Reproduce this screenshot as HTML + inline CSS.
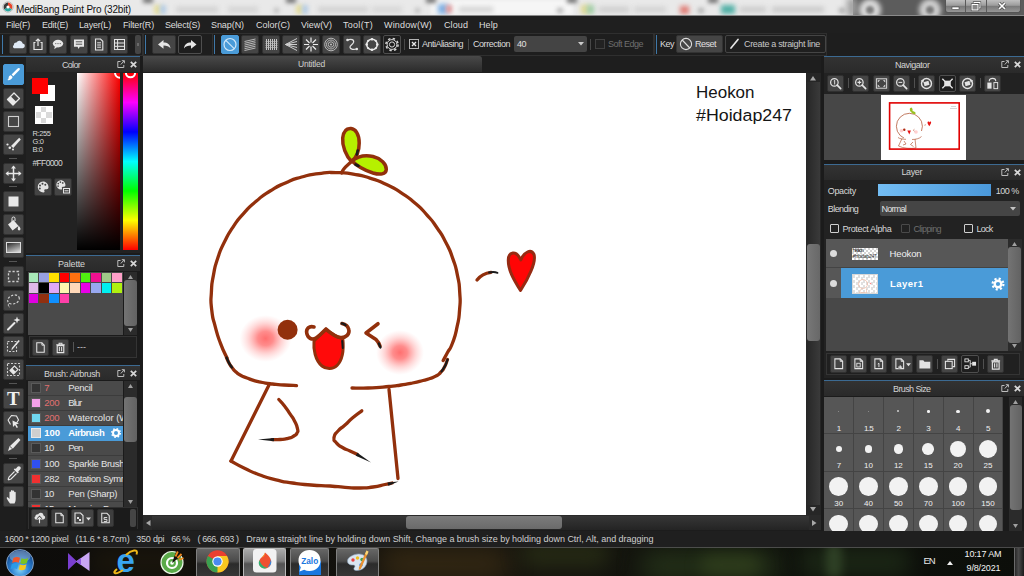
<!DOCTYPE html>
<html lang="en">
<head>
<meta charset="utf-8">
<title>MediBang Paint Pro (32bit)</title>
<style>
*{box-sizing:border-box;margin:0;padding:0}
html,body{width:1024px;height:576px;overflow:hidden;background:#1c1c1c}
body{position:relative;font-family:"Liberation Sans","DejaVu Sans",sans-serif;font-size:9px;color:#d8d8d8}
.a{position:absolute}
.t{position:absolute;white-space:nowrap;line-height:1}
svg{overflow:visible}
.tb{position:absolute;border-radius:2px;background:#454545;border:1px solid #303030}
.tb.dk{background:#1e1e1e;border:1px solid #4e4e4e}
.tb.bl{background:#4a9bd8;border-color:#4a9bd8}
.vb{position:absolute;width:1px;background:#3f78a8}
.ph{position:absolute;height:16px;background:linear-gradient(#343434,#2b2b2b);border-top:1px solid #3c6a92}
.pb{position:absolute;background:#464646}

</style>
</head>
<body>
<div class="a" style="left:0px;top:0px;width:1024px;height:16px;overflow:hidden"><div class="a" style="left:0px;top:0px;width:853px;height:15px;background:#e9e9e9"></div><div class="a" style="left:431px;top:0px;width:142px;height:15px;background:#f6f6f6;filter:blur(2px)"></div><div class="a" style="left:154px;top:5px;width:7px;height:9px;background:#e4dc9c;filter:blur(2px);"></div><div class="a" style="left:160px;top:5px;width:6px;height:9px;background:#b4cce4;filter:blur(2px);"></div><div class="a" style="left:176px;top:7px;width:42px;height:5px;background:#cfcfcf;filter:blur(2.5px);"></div><div class="a" style="left:228px;top:7px;width:30px;height:5px;background:#d2d2d2;filter:blur(2.5px);"></div><div class="a" style="left:274px;top:8px;width:5px;height:5px;background:#bdbdbd;filter:blur(2px);"></div><div class="a" style="left:296px;top:5px;width:7px;height:9px;background:#e4dc9c;filter:blur(2px);"></div><div class="a" style="left:302px;top:5px;width:6px;height:9px;background:#b4cce4;filter:blur(2px);"></div><div class="a" style="left:318px;top:7px;width:50px;height:5px;background:#cfcfcf;filter:blur(2.5px);"></div><div class="a" style="left:372px;top:7px;width:30px;height:5px;background:#d4d4d4;filter:blur(2.5px);"></div><div class="a" style="left:415px;top:8px;width:5px;height:5px;background:#bdbdbd;filter:blur(2px);"></div><div class="a" style="left:438px;top:4px;width:10px;height:10px;background:#7fb0e4;filter:blur(2.5px);"></div><div class="a" style="left:446px;top:5px;width:6px;height:8px;background:#e49a9a;filter:blur(2px);"></div><div class="a" style="left:459px;top:7px;width:34px;height:5px;background:#d0d0d0;filter:blur(2.5px);"></div><div class="a" style="left:557px;top:8px;width:6px;height:5px;background:#b4b4b4;filter:blur(2px);"></div><div class="a" style="left:581px;top:5px;width:8px;height:9px;background:#e0d890;filter:blur(2.5px);"></div><div class="a" style="left:587px;top:5px;width:7px;height:9px;background:#9ccca4;filter:blur(2.5px);"></div><div class="a" style="left:599px;top:7px;width:30px;height:5px;background:#cbcbcb;filter:blur(2.5px);"></div><div class="a" style="left:634px;top:7px;width:32px;height:5px;background:#d0d0d0;filter:blur(2.5px);"></div><div class="a" style="left:680px;top:6px;width:9px;height:8px;background:#e07a72;filter:blur(2.5px);"></div><div class="a" style="left:698px;top:8px;width:6px;height:5px;background:#b0b0b0;filter:blur(2px);"></div><div class="a" style="left:721px;top:5px;width:14px;height:9px;background:#52b0a6;filter:blur(2.5px);"></div><div class="a" style="left:740px;top:7px;width:26px;height:5px;background:#c8c8c8;filter:blur(2.5px);"></div><div class="a" style="left:772px;top:7px;width:52px;height:5px;background:#c6c6c6;filter:blur(2.5px);"></div><div class="a" style="left:839px;top:8px;width:6px;height:5px;background:#aaa;filter:blur(2px);"></div><div class="a" style="left:143px;top:-3px;width:10px;height:6px;background:#777;filter:blur(2px);"></div><div class="a" style="left:286px;top:-3px;width:10px;height:6px;background:#777;filter:blur(2px);"></div><div class="a" style="left:426px;top:-3px;width:10px;height:6px;background:#777;filter:blur(2px);"></div><div class="a" style="left:567px;top:-3px;width:10px;height:6px;background:#777;filter:blur(2px);"></div><div class="a" style="left:708px;top:-3px;width:10px;height:6px;background:#777;filter:blur(2px);"></div><div class="a" style="left:853px;top:0px;width:171px;height:15px;background:#5c5c5c"></div><div class="a" style="left:847px;top:-2px;width:10px;height:19px;background:#a0a0a0;filter:blur(3px);"></div><div class="a" style="left:858.5px;top:-1px;width:22px;height:22px;background:#dadada;filter:blur(2.5px);border-radius:11px;"></div><div class="a" style="left:865.5px;top:6px;width:8px;height:8px;background:#7c7c7c;filter:blur(1.8px);border-radius:4px;"></div><div class="a" style="left:918.5px;top:-1px;width:22px;height:22px;background:#d0d0d0;filter:blur(2.5px);border-radius:11px;"></div><div class="a" style="left:925.5px;top:6px;width:8px;height:8px;background:#787878;filter:blur(1.8px);border-radius:4px;"></div><div class="a" style="left:945px;top:0px;width:76px;height:13px;border-radius:0 0 3px 3px;background:linear-gradient(#c0c0c0,#9c9c9c 45%,#787878 50%,#969696);border:1px solid #555;border-top:0"></div><div class="a" style="left:965px;top:0px;width:1px;height:12px;background:#5a5a5a"></div><div class="a" style="left:986px;top:0px;width:1px;height:12px;background:#5a5a5a"></div><svg class="a" style="left:945px;top:0px;" width="76" height="14" viewBox="0 0 76 14"><rect x="7" y="7" width="7" height="2.5" fill="#fff" stroke="#444" stroke-width=".6"/><rect x="29" y="2.5" width="6" height="5.5" fill="none" stroke="#444" stroke-width="2.2"/><rect x="29" y="2.5" width="6" height="5.5" fill="none" stroke="#fff" stroke-width="1"/><rect x="27" y="4.5" width="6" height="5.5" fill="#888" stroke="#444" stroke-width="2.2"/><rect x="27" y="4.5" width="6" height="5.5" fill="#888" stroke="#fff" stroke-width="1"/><path d="M54 3l6 6M60 3l-6 6" stroke="#444" stroke-width="3"/><path d="M54 3l6 6M60 3l-6 6" stroke="#fff" stroke-width="1.7"/></svg><div class="a" style="left:0px;top:15px;width:1024px;height:1px;background:#8a8a8a"></div><svg class="a" style="left:2px;top:1px;" width="12" height="12" viewBox="0 0 12 12"><circle cx="6" cy="6" r="5.2" fill="#f4f4f4" stroke="#999" stroke-width=".6"/><path d="M6 6L6 1.6A4.4 4.4 0 0 1 9.8 8.2Z" fill="#e8452c"/><path d="M6 6L9.8 8.2A4.4 4.4 0 0 1 2.2 8.2Z" fill="#2aa8a0"/><path d="M6 6L2.2 8.2A4.4 4.4 0 0 1 6 1.6Z" fill="#3a3a3a"/><circle cx="6" cy="6" r="1.6" fill="#fff"/></svg><div class="t" style="left:16px;top:4.5px;font-size:10px;color:#111;letter-spacing:-0.20px;">MediBang Paint Pro (32bit)</div></div>
<div class="a" style="left:0px;top:16px;width:1024px;height:17px;background:#1f1f1f"><div class="t" style="left:6px;top:4.5px;font-size:9px;color:#dedede;letter-spacing:-0.29px;">File(F)</div><div class="t" style="left:42px;top:4.5px;font-size:9px;color:#dedede;letter-spacing:-0.22px;">Edit(E)</div><div class="t" style="left:79px;top:4.5px;font-size:9px;color:#dedede;letter-spacing:-0.19px;">Layer(L)</div><div class="t" style="left:123px;top:4.5px;font-size:9px;color:#dedede;letter-spacing:-0.17px;">Filter(R)</div><div class="t" style="left:165px;top:4.5px;font-size:9px;color:#dedede;letter-spacing:-0.22px;">Select(S)</div><div class="t" style="left:211px;top:4.5px;font-size:9px;color:#dedede;letter-spacing:-0.07px;">Snap(N)</div><div class="t" style="left:256px;top:4.5px;font-size:9px;color:#dedede;">Color(C)</div><div class="t" style="left:301px;top:4.5px;font-size:9px;color:#dedede;letter-spacing:-0.05px;">View(V)</div><div class="t" style="left:343px;top:4.5px;font-size:9px;color:#dedede;letter-spacing:0.28px;">Tool(T)</div><div class="t" style="left:384px;top:4.5px;font-size:9px;color:#dedede;letter-spacing:0.17px;">Window(W)</div><div class="t" style="left:444px;top:4.5px;font-size:9px;color:#dedede;letter-spacing:0.10px;">Cloud</div><div class="t" style="left:479px;top:4.5px;font-size:9px;color:#dedede;letter-spacing:0.12px;">Help</div></div>
<div class="a" style="left:0px;top:33px;width:1024px;height:23px;background:#1e1e1e"><div class="a" style="left:0px;top:0px;width:143px;height:23px;border:1px solid #2f2f2f;border-left:0"></div><div class="a" style="left:143px;top:0px;width:70px;height:23px;border:1px solid #2f2f2f"></div><div class="a" style="left:212px;top:0px;width:442px;height:23px;border:1px solid #2f2f2f"></div><div class="a" style="left:654px;top:0px;width:173px;height:23px;border:1px solid #2f2f2f"></div><div class="vb" style="left:2px;top:2px;height:19px"></div><div class="vb" style="left:145px;top:2px;height:19px"></div><div class="vb" style="left:214px;top:2px;height:19px"></div><div class="vb" style="left:656px;top:2px;height:19px"></div><div class="tb " style="left:9px;top:2px;width:18px;height:19px"><svg class="a" style="left:0px;top:0px;" width="16" height="17" viewBox="0 0 16 17"><path d="M4.2 12.2h8.2a2.3 2.3 0 0 0 .3-4.6 3.3 3.3 0 0 0-6.2-1 2.2 2.2 0 0 0-2.6 2.3 1.8 1.8 0 0 0 .3 3.3z" fill="#dfe9f5"/></svg></div><div class="tb " style="left:29px;top:2px;width:18px;height:19px"><svg class="a" style="left:0px;top:0px;" width="16" height="17" viewBox="0 0 16 17"><path d="M5.5 6.5H4v7h8v-7h-1.5" fill="none" stroke="#e6e6e6" stroke-width="1.2"/><path d="M8 10V3.2M5.8 5.2L8 3l2.2 2.2" fill="none" stroke="#e6e6e6" stroke-width="1.2"/></svg></div><div class="tb " style="left:49px;top:2px;width:18px;height:19px"><svg class="a" style="left:0px;top:0px;" width="16" height="17" viewBox="0 0 16 17"><ellipse cx="8" cy="7.6" rx="5.2" ry="3.8" fill="#e6e6e6"/><path d="M5 10l-.8 3.2 3.3-2.4z" fill="#e6e6e6"/><circle cx="5.8" cy="7.6" r=".6" fill="#555"/><circle cx="8" cy="7.6" r=".6" fill="#555"/><circle cx="10.2" cy="7.6" r=".6" fill="#555"/></svg></div><div class="tb " style="left:70px;top:2px;width:18px;height:19px"><svg class="a" style="left:0px;top:0px;" width="16" height="17" viewBox="0 0 16 17"><path d="M3 3.5h10v7.2H8.8L7.5 13 6.6 10.7H3z" fill="#e6e6e6"/><path d="M4.8 5.8h6.4M4.8 8.2h6.4" stroke="#555" stroke-width="1"/></svg></div><div class="tb " style="left:90px;top:2px;width:18px;height:19px"><svg class="a" style="left:0px;top:0px;" width="16" height="17" viewBox="0 0 16 17"><path d="M4.5 3h5l2.3 2.3V14H4.5z" fill="none" stroke="#e6e6e6" stroke-width="1.1"/><path d="M6.2 6.8h3.8M6.2 9h3.8M6.2 11.2h3.8" stroke="#e6e6e6" stroke-width="1"/></svg></div><div class="tb " style="left:110px;top:2px;width:18px;height:19px"><svg class="a" style="left:0px;top:0px;" width="16" height="17" viewBox="0 0 16 17"><rect x="3.5" y="3.5" width="10" height="10" fill="none" stroke="#e6e6e6" stroke-width="1"/><path d="M3.5 7h10M3.5 10.3h10M6.6 3.5v10" stroke="#e6e6e6" stroke-width="1"/><circle cx="5" cy="12" r="1.7" fill="#454545" stroke="#e6e6e6" stroke-width=".8"/></svg></div><div class="a" style="left:135px;top:2px;width:6px;height:19px;background:#454545;border-radius:2px"></div><div class="a" style="left:137px;top:10px;width:2px;height:3px;background:#6a6a6a"></div><div class="tb " style="left:152px;top:2px;width:24px;height:19px"><svg class="a" style="left:0px;top:0px;" width="22" height="17" viewBox="0 0 22 17"><path d="M5 8.5L10.5 4v2.6c4 0 6.6 1.9 7 6-1.6-2.3-3.7-3-7-3v3.2z" fill="#e6e6e6"/></svg></div><div class="tb dk" style="left:178px;top:2px;width:24px;height:19px"><svg class="a" style="left:0px;top:0px;" width="22" height="17" viewBox="0 0 22 17"><path d="M17.5 8.5L12 4v2.6c-4 0-6.6 1.9-7 6 1.6-2.3 3.7-3 7-3v3.2z" fill="#e6e6e6"/></svg></div><div class="tb bl" style="left:221px;top:2px;width:18px;height:19px"><svg class="a" style="left:0px;top:0px;" width="16" height="17" viewBox="0 0 16 17"><circle cx="8" cy="8.500" r="6" fill="none" stroke="#cfe6f8" stroke-width="1.200"/><path d="M3.800 4.300l8.400 8.400" stroke="#cfe6f8" stroke-width="1.200"/></svg></div><div class="tb " style="left:241px;top:2px;width:18px;height:19px"><svg class="a" style="left:0px;top:0px;" width="16" height="17" viewBox="0 0 16 17"><path d="M2.500 5.500l11-2.500M2.500 7.300l11-2.500M2.500 9.100l11-2.500M2.500 10.900l11-2.500M2.500 12.700l11-2.500M2.500 14.500l11-2.500" stroke="#c4c4c4" stroke-width=".9"/></svg></div><div class="tb " style="left:262px;top:2px;width:18px;height:19px"><svg class="a" style="left:0px;top:0px;" width="16" height="17" viewBox="0 0 16 17"><path d="M3.500 3v11M5.500 3v11M7.500 3v11M9.500 3v11M11.500 3v11M13.500 3v11" stroke="#d4d4d4" stroke-width=".9"/><path d="M2.500 5.500h12M2.500 7.500h12M2.500 9.500h12M2.500 11.500h12" stroke="#bbb" stroke-width=".7"/></svg></div><div class="tb " style="left:282px;top:2px;width:18px;height:19px"><svg class="a" style="left:0px;top:0px;" width="16" height="17" viewBox="0 0 16 17"><path d="M2.500 8.500L14 2.500M2.500 8.500L14 5.500M2.500 8.500H14M2.500 8.500L14 11.500M2.500 8.500L14 14.500" stroke="#cfcfcf" stroke-width="1"/></svg></div><div class="tb " style="left:302px;top:2px;width:18px;height:19px"><svg class="a" style="left:0px;top:0px;" width="16" height="17" viewBox="0 0 16 17"><path d="M8 1.500v5M8 10.500v5M1 8.500h5M10 8.500h5M3 3.500l3.500 3.500M9.500 10l3.500 3.500M13 3.500L9.500 7M6.500 10L3 13.500" stroke="#ececec" stroke-width="1.200"/></svg></div><div class="tb " style="left:322px;top:2px;width:18px;height:19px"><svg class="a" style="left:0px;top:0px;" width="16" height="17" viewBox="0 0 16 17"><circle cx="8" cy="8.500" r="6.300" fill="none" stroke="#c4c4c4" stroke-width=".9"/><circle cx="8" cy="8.500" r="4.500" fill="none" stroke="#c4c4c4" stroke-width=".9"/><circle cx="8" cy="8.500" r="2.700" fill="none" stroke="#c4c4c4" stroke-width=".9"/><circle cx="8" cy="8.500" r="1" fill="#c4c4c4"/></svg></div><div class="tb " style="left:343px;top:2px;width:18px;height:19px"><svg class="a" style="left:0px;top:0px;" width="16" height="17" viewBox="0 0 16 17"><path d="M3.500 4C7 2.500 10.500 3.500 9.500 6.500C8.500 9 5.500 9.500 6 11.500C6.500 13.500 10 13.800 12.500 13" fill="none" stroke="#e4e4e4" stroke-width="1.200"/><circle cx="3.500" cy="4" r="1.300" fill="#e4e4e4"/><circle cx="12.800" cy="13" r="1.300" fill="#e4e4e4"/></svg></div><div class="tb " style="left:363px;top:2px;width:18px;height:19px"><svg class="a" style="left:0px;top:0px;" width="16" height="17" viewBox="0 0 16 17"><circle cx="8" cy="8.500" r="5.300" fill="none" stroke="#ececec" stroke-width="1.400"/><g fill="#ececec"><circle cx="8" cy="3.200" r="1.300"/><circle cx="8" cy="13.800" r="1.300"/><circle cx="2.700" cy="8.500" r="1.300"/><circle cx="13.300" cy="8.500" r="1.300"/><circle cx="4.250" cy="4.750" r="1.100"/><circle cx="11.750" cy="4.750" r="1.100"/><circle cx="4.250" cy="12.250" r="1.100"/><circle cx="11.750" cy="12.250" r="1.100"/></g></svg></div><div class="tb dk" style="left:383px;top:2px;width:18px;height:19px"><svg class="a" style="left:0px;top:0px;" width="16" height="17" viewBox="0 0 16 17"><circle cx="8" cy="8.500" r="2.600" fill="none" stroke="#d8d8d8" stroke-width="1"/><circle cx="8" cy="8.500" r="4.900" fill="none" stroke="#d8d8d8" stroke-width="1" /><circle cx="8" cy="8.500" r="6.100" fill="none" stroke="#d8d8d8" stroke-width="1.500" stroke-dasharray="2.400 2.390"/></svg></div><div class="a" style="left:404px;top:6px;width:1px;height:11px;background:#484848"></div><div class="a" style="left:409px;top:6px;width:10px;height:10px;border:1px solid #b4b4b4;background:#1f1f1f"></div><svg class="a" style="left:409px;top:6px;" width="10" height="10" viewBox="0 0 10 10"><path d="M3 3l4 4M7 3l-4 4" stroke="#e8e8e8" stroke-width="1.300"/></svg><div class="t" style="left:422px;top:7px;font-size:9px;color:#dcdcdc;letter-spacing:-0.50px;">AntiAliasing</div><div class="a" style="left:468px;top:6px;width:1px;height:11px;background:#484848"></div><div class="t" style="left:473px;top:7px;font-size:9px;color:#dcdcdc;letter-spacing:-0.45px;">Correction</div><div class="a" style="left:514px;top:3px;width:73px;height:16px;background:#444;border-radius:2px"></div><div class="t" style="left:517px;top:7px;font-size:9px;color:#e0e0e0;letter-spacing:-0.51px;">40</div><svg class="a" style="left:578px;top:9px;" width="6" height="4" viewBox="0 0 6 4"><path d="M0 0h6L3 3.500z" fill="#ccc"/></svg><div class="a" style="left:590px;top:6px;width:1px;height:11px;background:#484848"></div><div class="a" style="left:595px;top:6px;width:10px;height:10px;border:1px solid #404040;background:#222"></div><div class="t" style="left:608px;top:7px;font-size:9px;color:#6e6e6e;letter-spacing:-0.50px;">Soft Edge</div><div class="t" style="left:660px;top:7px;font-size:9px;color:#dcdcdc;letter-spacing:-0.51px;">Key</div><div class="a" style="left:676px;top:2px;width:47px;height:18px;background:#454545;border-radius:2px;border:1px solid #333"></div><svg class="a" style="left:679px;top:4px;" width="14" height="14" viewBox="0 0 14 14"><circle cx="7" cy="7" r="5.600" fill="none" stroke="#ddd" stroke-width="1.100"/><path d="M3.200 3l7.600 8" stroke="#ddd" stroke-width="1.100"/></svg><div class="t" style="left:695px;top:7px;font-size:9px;color:#e0e0e0;letter-spacing:-0.50px;">Reset</div><div class="a" style="left:725px;top:2px;width:101px;height:18px;background:#1f1f1f;border-radius:2px;border:1px solid #454545"></div><svg class="a" style="left:730px;top:5px;" width="10" height="11" viewBox="0 0 10 11"><path d="M1 10L8 1.500" stroke="#e6e6e6" stroke-width="1.700" stroke-linecap="round"/></svg><div class="t" style="left:744px;top:7px;font-size:9px;color:#c8c8c8;letter-spacing:-0.32px;">Create a straight line</div></div>
<div class="a" style="left:0px;top:56px;width:26px;height:474px;background:#1e1e1e"><div class="a" style="left:0px;top:0px;width:26px;height:1px;background:#3c6a92"></div><div class="tb bl" style="left:3px;top:8px;width:21px;height:21px"><svg class="a" style="left:0px;top:0px;" width="19" height="19" viewBox="0 0 19 19"><path d="M15.500 3.200c.8.700.3 1.500-.5 2.300L9.300 11.200 7.600 9.500l5.700-5.800c.8-.8 1.500-1.100 2.200-.5z" fill="#fff"/><path d="M6.800 10.200l1.800 1.800c-.5 2.200-2.600 3.400-5.400 3.100 1.500-.8 1.300-1.800 1.500-2.900.2-1.100.9-1.800 2.100-2z" fill="#fff"/></svg></div><div class="tb " style="left:3px;top:32px;width:21px;height:21px"><svg class="a" style="left:0px;top:0px;" width="19" height="19" viewBox="0 0 19 19"><path d="M3.500 10.500L10 4l5.500 5.500L9 16z" fill="none" stroke="#e8e8e8" stroke-width="1.300" stroke-linejoin="round"/><path d="M3.500 10.500L6.700 7.300l5.500 5.500L9 16z" fill="#e8e8e8"/></svg></div><div class="tb " style="left:3px;top:55px;width:21px;height:21px"><svg class="a" style="left:0px;top:0px;" width="19" height="19" viewBox="0 0 19 19"><rect x="4.500" y="4.500" width="10" height="10" fill="none" stroke="#d0d0d0" stroke-width="1.100"/></svg></div><div class="tb " style="left:3px;top:78px;width:21px;height:21px"><svg class="a" style="left:0px;top:0px;" width="19" height="19" viewBox="0 0 19 19"><path d="M15.200 2.800L16.800 4.400 9.300 13 7 11z" fill="#e8e8e8"/><circle cx="3.500" cy="9.500" r="1.100" fill="#e8e8e8"/><circle cx="5.800" cy="12.800" r="1.300" fill="#e8e8e8"/><circle cx="9" cy="14.600" r="1" fill="#e8e8e8"/></svg></div><div class="a" style="left:9px;top:102px;width:8px;height:1px;background:#555"></div><div class="tb " style="left:3px;top:107px;width:21px;height:21px"><svg class="a" style="left:0px;top:0px;" width="19" height="19" viewBox="0 0 19 19"><path d="M9.500 2.500v14M2.500 9.500h14" stroke="#e8e8e8" stroke-width="1.500"/><path d="M9.500 1.500l2.500 3h-5zM9.500 17.500l2.500-3h-5zM1.500 9.500l3-2.500v5zM17.500 9.500l-3-2.500v5z" fill="#e8e8e8"/></svg></div><div class="a" style="left:9px;top:130px;width:8px;height:1px;background:#555"></div><div class="tb " style="left:3px;top:135px;width:21px;height:21px"><svg class="a" style="left:0px;top:0px;" width="19" height="19" viewBox="0 0 19 19"><rect x="4.500" y="4.500" width="10" height="10" fill="#e8e8e8"/></svg></div><div class="tb " style="left:3px;top:158px;width:21px;height:21px"><svg class="a" style="left:0px;top:0px;" width="19" height="19" viewBox="0 0 19 19"><path d="M4 9.500L9.500 5l5 6-6 4.500z" fill="#e8e8e8"/><path d="M8 7V3.500a1.500 1.500 0 0 1 3 0V6" fill="none" stroke="#e8e8e8" stroke-width="1"/><path d="M14.500 10.500c1 1.300 2 2.500 2 3.500a1.400 1.400 0 0 1-2.800 0c0-1 .8-2.200.8-3.500z" fill="#e8e8e8"/></svg></div><div class="tb" style="left:3px;top:181px;width:21px;height:21px"><div class="a" style="left:2px;top:4px;width:15px;height:11px;border:1px solid #dcdcdc;background:linear-gradient(160deg,#3c3c3c 10%,#d4d4d4 95%)"></div></div><div class="a" style="left:9px;top:205px;width:8px;height:1px;background:#555"></div><div class="tb " style="left:3px;top:210px;width:21px;height:21px"><svg class="a" style="left:0px;top:0px;" width="19" height="19" viewBox="0 0 19 19"><rect x="4.500" y="4.500" width="10" height="10" fill="none" stroke="#cfcfcf" stroke-width="1.300" stroke-dasharray="2.200 1.800"/></svg></div><div class="tb " style="left:3px;top:234px;width:21px;height:21px"><svg class="a" style="left:0px;top:0px;" width="19" height="19" viewBox="0 0 19 19"><ellipse cx="9.500" cy="8.500" rx="6" ry="4.300" fill="none" stroke="#cfcfcf" stroke-width="1.200" stroke-dasharray="2.200 1.600" transform="rotate(-20 9.500 8.500)"/><path d="M5 12.500c-1 1-1 2.500.5 3.500" fill="none" stroke="#cfcfcf" stroke-width="1"/></svg></div><div class="tb " style="left:3px;top:257px;width:21px;height:21px"><svg class="a" style="left:0px;top:0px;" width="19" height="19" viewBox="0 0 19 19"><path d="M4 15.500L10.500 9" stroke="#e8e8e8" stroke-width="2" stroke-linecap="round"/><path d="M13 2.500l.9 2.600 2.600.9-2.600.9-.9 2.600-.9-2.600-2.600-.9 2.600-.9z" fill="#e8e8e8"/></svg></div><div class="tb " style="left:3px;top:280px;width:21px;height:21px"><svg class="a" style="left:0px;top:0px;" width="19" height="19" viewBox="0 0 19 19"><rect x="3.500" y="4.500" width="9" height="10" fill="none" stroke="#cfcfcf" stroke-width="1.100" stroke-dasharray="2 1.500"/><path d="M15.800 4L9 11.800 7.500 13.500l.3-2.400L14.500 3z" fill="#e8e8e8"/></svg></div><div class="tb " style="left:3px;top:303px;width:21px;height:21px"><svg class="a" style="left:0px;top:0px;" width="19" height="19" viewBox="0 0 19 19"><rect x="3.500" y="3.500" width="12" height="12" fill="none" stroke="#cfcfcf" stroke-width="1.100" stroke-dasharray="2 1.500"/><path d="M6 10.500L10.500 6l3.500 3.500L9.500 14z" fill="none" stroke="#e8e8e8" stroke-width="1.100"/><path d="M6 10.500l2.200-2.200 3.500 3.500L9.500 14z" fill="#e8e8e8"/></svg></div><div class="a" style="left:9px;top:327px;width:8px;height:1px;background:#555"></div><div class="tb" style="left:3px;top:332px;width:21px;height:21px"><div class="t" style="left:3px;top:0px;font-size:19px;color:#f0f0f0;font-weight:700;font-family:'Liberation Serif',serif;">T</div></div><div class="tb " style="left:3px;top:355px;width:21px;height:21px"><svg class="a" style="left:0px;top:0px;" width="19" height="19" viewBox="0 0 19 19"><path d="M4 8l3.500-4.500 5 .5 2 4-2 3" fill="none" stroke="#e8e8e8" stroke-width="1.100"/><path d="M4 8l2.500 4.500" fill="none" stroke="#e8e8e8" stroke-width="1.100"/><path d="M8.500 8.500l6.500 3-2.800.8 1.800 3-1.300.7-1.700-3-2 2z" fill="#e8e8e8"/></svg></div><div class="tb " style="left:3px;top:378px;width:21px;height:21px"><svg class="a" style="left:0px;top:0px;" width="19" height="19" viewBox="0 0 19 19"><path d="M14.500 3l2 2-7.500 8.500-5 2.500 1.500-4.500z" fill="#e8e8e8"/><path d="M5.800 11.300l3 2.800" stroke="#444" stroke-width=".9"/></svg></div><div class="a" style="left:9px;top:402px;width:8px;height:1px;background:#555"></div><div class="tb " style="left:3px;top:407px;width:21px;height:21px"><svg class="a" style="left:0px;top:0px;" width="19" height="19" viewBox="0 0 19 19"><path d="M13.500 2.800a1.900 1.900 0 0 1 2.700 2.700l-2 2 .7.700-1.200 1.200-3.900-3.900 1.200-1.200.7.700z" fill="#e8e8e8"/><path d="M10.500 7.500L5 13l-.8 2.300.5.500L7 15l5.500-5.500" fill="none" stroke="#e8e8e8" stroke-width="1.100"/></svg></div><div class="tb " style="left:3px;top:430px;width:21px;height:21px"><svg class="a" style="left:0px;top:0px;" width="19" height="19" viewBox="0 0 19 19"><path d="M6 16.500c-1.500-2-2.600-3.600-3.200-5-.4-1 .8-1.600 1.500-.7L5.500 12V5.200c0-1.100 1.500-1.100 1.500 0V3.800c0-1.100 1.600-1.100 1.600 0v.6c0-1.100 1.600-1.100 1.600 0v1.200c0-1 1.500-1 1.500 0V12c0 1.800-.5 3.300-1.200 4.500z" fill="#e8e8e8"/></svg></div></div>
<div class="a" style="left:26px;top:56px;width:116px;height:474px;background:#1b1b1b"></div>
<div class="a" style="left:26px;top:56px;width:114px;height:16px;background:linear-gradient(#333,#2a2a2a)"><div class="a" style="left:0px;top:0px;width:114px;height:1px;background:#3c6a92"></div><div class="t" style="left:36px;top:4.5px;font-size:9px;color:#d4d4d4;letter-spacing:-0.70px;">Color</div><svg class="a" style="left:91px;top:4px;" width="8" height="8" viewBox="0 0 8 8"><path d="M3.500 1.500H.8v6h6V5" fill="none" stroke="#bdbdbd" stroke-width="1"/><path d="M3.800 4.500L7.200.800M4.800.700h2.600v2.600" fill="none" stroke="#bdbdbd" stroke-width="1"/></svg><svg class="a" style="left:103.5px;top:5px;" width="7" height="7" viewBox="0 0 7 7"><path d="M.8.800l5.400 5.400M6.200.800L.8 6.200" stroke="#d8d8d8" stroke-width="1.700"/></svg></div>
<div class="a" style="left:26px;top:72px;width:114px;height:181px;background:#222;overflow:hidden"><div class="a" style="left:13.5px;top:13px;width:15px;height:15.5px;background:#fff"></div><div class="a" style="left:6px;top:6px;width:16px;height:16px;background:#ff0000"></div><div class="a" style="left:8.5px;top:34px;width:18px;height:18px;background:#fff"></div><div class="a" style="left:9.5px;top:40.4px;width:5.4px;height:5.4px;background:#d9d9d9"></div><div class="a" style="left:14.9px;top:35.0px;width:5.4px;height:5.4px;background:#d9d9d9"></div><div class="a" style="left:14.9px;top:45.8px;width:5.4px;height:5.4px;background:#d9d9d9"></div><div class="a" style="left:20.3px;top:40.4px;width:5.4px;height:5.4px;background:#d9d9d9"></div><div class="t" style="left:6.5px;top:58px;font-size:7.5px;color:#d8d8d8;letter-spacing:-0.40px;">R:255</div><div class="t" style="left:6.5px;top:66px;font-size:7.5px;color:#d8d8d8;letter-spacing:-0.36px;">G:0</div><div class="t" style="left:6.5px;top:74px;font-size:7.5px;color:#d8d8d8;letter-spacing:-0.42px;">B:0</div><div class="t" style="left:6.5px;top:87px;font-size:8.5px;color:#d8d8d8;letter-spacing:-0.65px;">#FF0000</div><div class="tb" style="left:7.5px;top:106px;width:18px;height:18px"><svg class="a" style="left:0px;top:0px;" width="16" height="16" viewBox="0 0 16 16"><path d="M8 2.500a5.500 5.500 0 1 0 .5 11c1 0 1.300-.8.900-1.500-.5-.9 0-1.800 1-1.800h1.400c1 0 1.700-.7 1.700-1.900C13.500 5 11 2.500 8 2.500z" fill="#e4e4e4"/><circle cx="5" cy="6.500" r="1" fill="#444"/><circle cx="7.500" cy="4.800" r="1" fill="#444"/><circle cx="10.300" cy="5.800" r="1" fill="#444"/><circle cx="4.800" cy="9.500" r="1" fill="#444"/></svg></div><div class="tb" style="left:28px;top:106px;width:18px;height:18px"><svg class="a" style="left:0px;top:0px;" width="16" height="16" viewBox="0 0 16 16"><g transform="translate(-1 -1) scale(.85)"><path d="M8 2.500a5.500 5.500 0 1 0 .5 11c1 0 1.300-.8.900-1.500-.5-.9 0-1.800 1-1.800h1.400c1 0 1.700-.7 1.700-1.900C13.500 5 11 2.500 8 2.500z" fill="#e4e4e4"/><circle cx="5" cy="6.500" r="1" fill="#444"/><circle cx="7.500" cy="4.800" r="1" fill="#444"/><circle cx="10.300" cy="5.800" r="1" fill="#444"/><circle cx="4.800" cy="9.500" r="1" fill="#444"/></g><rect x="8.500" y="9.500" width="6" height="4.500" fill="#444" stroke="#e4e4e4" stroke-width="1"/><path d="M9.500 11.800h4" stroke="#e4e4e4" stroke-width="1"/></svg></div><div class="a" style="left:51px;top:1px;width:43px;height:177px;background:linear-gradient(to top,#000,rgba(0,0,0,0)),linear-gradient(to right,#fff,#f00)"></div><div class="a" style="left:97px;top:1px;width:15px;height:177px;background:linear-gradient(to bottom,#f00 0%,#f0f 16.600%,#00f 33.300%,#0ff 50%,#0f0 66.600%,#ff0 83.300%,#f00 100%)"></div><svg class="a" style="left:51px;top:1px;overflow:hidden" width="43" height="10" viewBox="0 0 43 10"><circle cx="43" cy="-.3" r="5" fill="none" stroke="#fff" stroke-width="2"/></svg><svg class="a" style="left:97px;top:1px;overflow:hidden" width="15" height="10" viewBox="0 0 15 10"><circle cx="7.500" cy="-.3" r="4.600" fill="none" stroke="#fff" stroke-width="2.100"/></svg></div>
<div class="a" style="left:26px;top:255px;width:114px;height:16px;background:linear-gradient(#333,#2a2a2a)"><div class="a" style="left:0px;top:0px;width:114px;height:1px;background:#3c6a92"></div><div class="t" style="left:32px;top:4.5px;font-size:9px;color:#d4d4d4;letter-spacing:-0.15px;">Palette</div><svg class="a" style="left:91px;top:4px;" width="8" height="8" viewBox="0 0 8 8"><path d="M3.500 1.500H.8v6h6V5" fill="none" stroke="#bdbdbd" stroke-width="1"/><path d="M3.800 4.500L7.200.800M4.800.700h2.600v2.600" fill="none" stroke="#bdbdbd" stroke-width="1"/></svg><svg class="a" style="left:103.5px;top:5px;" width="7" height="7" viewBox="0 0 7 7"><path d="M.8.800l5.400 5.400M6.200.800L.8 6.200" stroke="#d8d8d8" stroke-width="1.700"/></svg></div>
<div class="a" style="left:28px;top:272px;width:95px;height:63px;background:#4a4a4a"><div class="a" style="left:0.5px;top:0.8px;width:9.6px;height:9.4px;background:#a8e8b8"></div><div class="a" style="left:10.95px;top:0.8px;width:9.6px;height:9.4px;background:#98a0e0"></div><div class="a" style="left:21.4px;top:0.8px;width:9.6px;height:9.4px;background:#ffe000"></div><div class="a" style="left:31.85px;top:0.8px;width:9.6px;height:9.4px;background:#ff0000"></div><div class="a" style="left:42.3px;top:0.8px;width:9.6px;height:9.4px;background:#ff7010"></div><div class="a" style="left:52.75px;top:0.8px;width:9.6px;height:9.4px;background:#50f010"></div><div class="a" style="left:63.2px;top:0.8px;width:9.6px;height:9.4px;background:#f01090"></div><div class="a" style="left:73.65px;top:0.8px;width:9.6px;height:9.4px;background:#a0c888"></div><div class="a" style="left:84.1px;top:0.8px;width:9.6px;height:9.4px;background:#ffa0c8"></div><div class="a" style="left:0.5px;top:11.3px;width:9.6px;height:9.4px;background:#e0b8e8"></div><div class="a" style="left:10.95px;top:11.3px;width:9.6px;height:9.4px;background:#000000"></div><div class="a" style="left:21.4px;top:11.3px;width:9.6px;height:9.4px;background:#e0a8f8"></div><div class="a" style="left:31.85px;top:11.3px;width:9.6px;height:9.4px;background:#fff8b0"></div><div class="a" style="left:42.3px;top:11.3px;width:9.6px;height:9.4px;background:#ffd8b8"></div><div class="a" style="left:52.75px;top:11.3px;width:9.6px;height:9.4px;background:#e800e8"></div><div class="a" style="left:63.2px;top:11.3px;width:9.6px;height:9.4px;background:#98a8f0"></div><div class="a" style="left:73.65px;top:11.3px;width:9.6px;height:9.4px;background:#00f0f0"></div><div class="a" style="left:84.1px;top:11.3px;width:9.6px;height:9.4px;background:#b0f010"></div><div class="a" style="left:0.5px;top:21.8px;width:9.6px;height:9.4px;background:#e000e0"></div><div class="a" style="left:10.95px;top:21.8px;width:9.6px;height:9.4px;background:#903010"></div><div class="a" style="left:21.4px;top:21.8px;width:9.6px;height:9.4px;background:#1090ff"></div><div class="a" style="left:31.85px;top:21.8px;width:9.6px;height:9.4px;background:#ff40a8"></div></div>
<div class="a" style="left:124px;top:272px;width:13px;height:63px;background:#2b2b2b"></div><svg class="a" style="left:128.0px;top:275px;" width="5" height="4" viewBox="0 0 5 4"><path d="M0 4L2.500 0 5 4z" fill="#a0a0a0"/></svg><svg class="a" style="left:128.0px;top:328px;" width="5" height="4" viewBox="0 0 5 4"><path d="M0 0L2.500 4 5 0z" fill="#a0a0a0"/></svg><div class="a" style="left:124.3px;top:280px;width:12.4px;height:46px;background:linear-gradient(90deg,#747474,#626262);border-radius:3px"></div>
<div class="a" style="left:29px;top:336px;width:108px;height:22px;background:#202020;border:1px solid #343434"><div class="tb" style="left:2px;top:2px;width:17px;height:17px"><svg class="a" style="left:0px;top:0px;" width="15" height="15" viewBox="0 0 16 16"><path d="M4 3h5.500L12 5.500V13H4z" fill="none" stroke="#e4e4e4" stroke-width="1.100"/><path d="M9.500 3v2.500H12" fill="none" stroke="#e4e4e4" stroke-width="1"/></svg></div><div class="tb" style="left:22px;top:2px;width:17px;height:17px"><svg class="a" style="left:0px;top:0px;" width="15" height="15" viewBox="0 0 16 16"><path d="M4.500 6h7v7.500h-7z" fill="none" stroke="#e4e4e4" stroke-width="1.200"/><path d="M3.500 5h9M6.500 5V3.500h3V5M6.800 7.500v4.500M9.200 7.500v4.500" stroke="#e4e4e4" stroke-width="1.100" fill="none"/></svg></div><div class="a" style="left:43px;top:5px;width:1px;height:10px;background:#555"></div><div class="t" style="left:47px;top:5.5px;font-size:9px;color:#c8c8c8;">---</div></div>
<div class="a" style="left:26px;top:365px;width:114px;height:15px;background:linear-gradient(#333,#2a2a2a)"><div class="a" style="left:0px;top:0px;width:114px;height:1px;background:#3c6a92"></div><div class="t" style="left:18px;top:4.5px;font-size:9px;color:#d4d4d4;letter-spacing:-0.37px;">Brush: Airbrush</div><svg class="a" style="left:91px;top:4px;" width="8" height="8" viewBox="0 0 8 8"><path d="M3.500 1.500H.8v6h6V5" fill="none" stroke="#bdbdbd" stroke-width="1"/><path d="M3.800 4.500L7.200.800M4.800.700h2.600v2.600" fill="none" stroke="#bdbdbd" stroke-width="1"/></svg><svg class="a" style="left:103.5px;top:5px;" width="7" height="7" viewBox="0 0 7 7"><path d="M.8.800l5.400 5.400M6.200.800L.8 6.200" stroke="#d8d8d8" stroke-width="1.700"/></svg></div>
<div class="a" style="left:28px;top:381px;width:94.5px;height:125.5px;background:#4a4a4a;overflow:hidden;"><div class="a" style="left:0px;top:0.0px;width:95px;height:15.1px;background:#4a4a4a;border-bottom:1px solid #3c3c3c;overflow:hidden"><div class="a" style="left:2.5px;top:2px;width:10px;height:10px;background:#333;border:1px solid #5a5a5a"></div><div class="t" style="left:16.2px;top:2px;font-size:9.5px;color:#e07070;letter-spacing:-0.80px;">7</div><div class="t" style="left:40.3px;top:2px;font-size:9.5px;color:#e4e4e4;letter-spacing:-0.31px;">Pencil</div></div><div class="a" style="left:0px;top:15.1px;width:95px;height:15.1px;background:#4a4a4a;border-bottom:1px solid #3c3c3c;overflow:hidden"><div class="a" style="left:2.5px;top:2px;width:10px;height:10px;background:#f5a0e8;border:1px solid #5a5a5a"></div><div class="t" style="left:16.2px;top:2px;font-size:9.5px;color:#e07070;letter-spacing:-0.29px;">200</div><div class="t" style="left:40.3px;top:2px;font-size:9.5px;color:#e4e4e4;letter-spacing:-0.98px;">Blur</div></div><div class="a" style="left:0px;top:30.2px;width:95px;height:15.1px;background:#4a4a4a;border-bottom:1px solid #3c3c3c;overflow:hidden"><div class="a" style="left:2.5px;top:2px;width:10px;height:10px;background:#70d8f0;border:1px solid #5a5a5a"></div><div class="t" style="left:16.2px;top:2px;font-size:9.5px;color:#e07070;letter-spacing:-0.29px;">200</div><div class="t" style="left:40.3px;top:2px;font-size:9.5px;color:#e4e4e4;letter-spacing:-0.03px;">Watercolor (W</div></div><div class="a" style="left:0px;top:45.3px;width:95px;height:15.1px;background:#4a9bd8;border-bottom:1px solid #4a9bd8;overflow:hidden"><div class="a" style="left:2.5px;top:2px;width:10px;height:10px;background:#cfcfcf;border:1px solid #e8e8e8"></div><div class="t" style="left:16.2px;top:2px;font-size:9.5px;color:#fff;font-weight:700;letter-spacing:0.05px;">100</div><div class="t" style="left:40.3px;top:2px;font-size:9.5px;color:#fff;font-weight:700;letter-spacing:-0.45px;">Airbrush</div><svg class="a" style="left:82.5px;top:2px;" width="10" height="10" viewBox="0 0 10 10"><circle cx="5" cy="5" r="3" fill="none" stroke="#fff" stroke-width="2"/><circle cx="5" cy="5" r="4.300" fill="none" stroke="#fff" stroke-width="1.600" stroke-dasharray="1.500 1.880"/></svg></div><div class="a" style="left:0px;top:60.4px;width:95px;height:15.1px;background:#4a4a4a;border-bottom:1px solid #3c3c3c;overflow:hidden"><div class="a" style="left:2.5px;top:2px;width:10px;height:10px;background:#333;border:1px solid #5a5a5a"></div><div class="t" style="left:16.2px;top:2px;font-size:9.5px;color:#e4e4e4;letter-spacing:-0.54px;">10</div><div class="t" style="left:40.3px;top:2px;font-size:9.5px;color:#e4e4e4;letter-spacing:-0.97px;">Pen</div></div><div class="a" style="left:0px;top:75.5px;width:95px;height:15.1px;background:#4a4a4a;border-bottom:1px solid #3c3c3c;overflow:hidden"><div class="a" style="left:2.5px;top:2px;width:10px;height:10px;background:#3050f0;border:1px solid #5a5a5a"></div><div class="t" style="left:16.2px;top:2px;font-size:9.5px;color:#e4e4e4;letter-spacing:-0.29px;">100</div><div class="t" style="left:40.3px;top:2px;font-size:9.5px;color:#e4e4e4;letter-spacing:-0.28px;">Sparkle Brush</div></div><div class="a" style="left:0px;top:90.6px;width:95px;height:15.1px;background:#4a4a4a;border-bottom:1px solid #3c3c3c;overflow:hidden"><div class="a" style="left:2.5px;top:2px;width:10px;height:10px;background:#f03030;border:1px solid #5a5a5a"></div><div class="t" style="left:16.2px;top:2px;font-size:9.5px;color:#e4e4e4;letter-spacing:-0.29px;">282</div><div class="t" style="left:40.3px;top:2px;font-size:9.5px;color:#e4e4e4;letter-spacing:-0.38px;">Rotation Symm</div></div><div class="a" style="left:0px;top:105.7px;width:95px;height:15.1px;background:#4a4a4a;border-bottom:1px solid #3c3c3c;overflow:hidden"><div class="a" style="left:2.5px;top:2px;width:10px;height:10px;background:#333;border:1px solid #5a5a5a"></div><div class="t" style="left:16.2px;top:2px;font-size:9.5px;color:#e4e4e4;letter-spacing:-0.54px;">10</div><div class="t" style="left:40.3px;top:2px;font-size:9.5px;color:#e4e4e4;letter-spacing:-0.20px;">Pen (Sharp)</div></div><div class="a" style="left:0px;top:120.8px;width:95px;height:15.1px;background:#4a4a4a;border-bottom:1px solid #3c3c3c;overflow:hidden"><div class="a" style="left:2.5px;top:2px;width:10px;height:10px;background:#f03030;border:1px solid #5a5a5a"></div><div class="t" style="left:16.2px;top:2px;font-size:9.5px;color:#e4e4e4;letter-spacing:-0.54px;">15</div><div class="t" style="left:40.3px;top:2px;font-size:9.5px;color:#e4e4e4;letter-spacing:-0.54px;">Mapping Pen</div></div></div>
<div class="a" style="left:124px;top:381px;width:13px;height:126px;background:#2b2b2b"></div><svg class="a" style="left:128.0px;top:384px;" width="5" height="4" viewBox="0 0 5 4"><path d="M0 4L2.500 0 5 4z" fill="#a0a0a0"/></svg><svg class="a" style="left:128.0px;top:500px;" width="5" height="4" viewBox="0 0 5 4"><path d="M0 0L2.500 4 5 0z" fill="#a0a0a0"/></svg><div class="a" style="left:124.3px;top:397px;width:12.4px;height:45px;background:linear-gradient(90deg,#747474,#626262);border-radius:3px"></div>
<div class="a" style="left:28px;top:507px;width:109.5px;height:22px;border:1px solid #303030;border-bottom:0"></div>
<div class="tb" style="left:30.700px;top:508.500px;width:17.500px;height:18px"><svg class="a" style="left:0px;top:0px;" width="15" height="16" viewBox="0 0 16 16"><path d="M3.800 9.500h8.400a2.200 2.200 0 0 0 .2-4.300 3.200 3.200 0 0 0-6-1 2.200 2.200 0 0 0-2.800 2.200 1.700 1.700 0 0 0 .2 3.100z" fill="#e4e4e4"/><path d="M8 7v6.500M5.800 9.200L8 7l2.200 2.200" stroke="#444" stroke-width="2.200" fill="none"/><path d="M8 7.500v6M6 9.500L8 7.500l2 2" stroke="#e4e4e4" stroke-width="1.200" fill="none"/></svg></div>
<div class="tb" style="left:51.200px;top:508.500px;width:17px;height:18px;background:#3e3e3e"><svg class="a" style="left:0px;top:0px;" width="15" height="16" viewBox="0 0 16 16"><path d="M4 3h5.500L12 5.500V13H4z" fill="none" stroke="#e4e4e4" stroke-width="1.100"/><path d="M9.500 3v2.500H12" fill="none" stroke="#e4e4e4" stroke-width="1"/></svg></div>
<div class="tb" style="left:71px;top:508.500px;width:23px;height:18px"><svg class="a" style="left:0px;top:0px;" width="21" height="16" viewBox="0 0 21 16"><path d="M3 3h5.500L11 5.500V13H3z" fill="none" stroke="#e4e4e4" stroke-width="1.100"/><rect x="5" y="7" width="2" height="2" fill="#e4e4e4"/><rect x="7" y="9" width="2" height="2" fill="#e4e4e4"/><path d="M14 7.500h5L16.500 10.500z" fill="#e4e4e4"/></svg></div>
<div class="tb" style="left:97px;top:508.500px;width:17px;height:18px;background:#3e3e3e"><svg class="a" style="left:0px;top:0px;" width="15" height="16" viewBox="0 0 16 16"><path d="M4 3h5.500L12 5.500V13H4z" fill="none" stroke="#e4e4e4" stroke-width="1.100"/><path d="M9.800 7.500H6.500v2h3v2.200H6.200" fill="none" stroke="#e4e4e4" stroke-width="1"/></svg></div>
<div class="a" style="left:129.7px;top:509px;width:6.3px;height:17.5px;background:#454545;border-radius:2px"></div>
<div class="a" style="left:143px;top:56px;width:681px;height:17px;background:#1e1e1e"></div>
<div class="a" style="left:143px;top:56px;width:339px;height:16px;background:linear-gradient(#494949,#2b2b2b);border-radius:0 3px 0 0"><div class="t" style="left:155px;top:3.7px;font-size:8.5px;color:#cfcfcf;letter-spacing:-0.23px;">Untitled</div></div>
<div class="a" style="left:143px;top:73px;width:662.5px;height:442px;background:#fff;overflow:hidden"><svg class="a" style="left:0;top:0" width="663" height="442" viewBox="143 73 663 442"><defs><radialGradient id="bl"><stop offset="0" stop-color="#ff6868" stop-opacity=".95"/><stop offset=".3" stop-color="#ff7070" stop-opacity=".8"/><stop offset=".65" stop-color="#ff8c8c" stop-opacity=".36"/><stop offset="1" stop-color="#ffb0b0" stop-opacity="0"/></radialGradient></defs><ellipse cx="265.500" cy="338.500" rx="26" ry="23.500" fill="url(#bl)"/><ellipse cx="400" cy="352.500" rx="24" ry="22.500" fill="url(#bl)"/><path d="M227.0 358.0C224.9 353.2 224.5 354.0 220.6 343.6C216.7 333.2 218.3 338.1 215.3 326.8C212.3 315.5 213.0 321.2 211.7 309.6C210.4 298.0 210.8 303.7 211.4 292.1C212.0 280.5 211.4 286.2 213.5 274.9C215.6 263.6 214.2 269.0 217.8 258.1C221.4 247.2 219.3 252.4 224.4 242.1C229.5 231.8 226.6 236.7 233.0 227.1C239.4 217.5 236.0 222.0 243.7 213.4C251.4 204.8 247.3 208.8 256.1 201.3C264.9 193.8 260.3 197.1 270.1 191.0C279.9 184.9 274.9 187.6 285.4 182.9C295.9 178.2 290.6 180.1 301.7 177.0C312.8 173.9 307.3 175.1 318.7 173.6C330.1 172.1 324.5 172.4 336.0 172.6C347.5 172.8 341.9 172.4 353.2 174.2C364.5 176.0 359.0 174.7 369.9 178.1C380.8 181.5 375.6 179.5 385.9 184.3C396.2 189.1 391.3 186.4 400.9 192.6C410.5 198.8 406.0 195.4 414.6 202.8C423.2 210.2 419.2 206.3 426.8 214.8C434.4 223.3 430.9 218.9 437.3 228.2C443.7 237.5 440.8 232.7 446.0 242.8C451.2 252.9 449.0 247.8 452.8 258.6C456.6 269.4 455.1 263.9 457.4 275.1C459.7 286.3 459.0 280.7 459.7 292.2C460.4 303.7 460.5 298.0 459.6 309.5C458.7 321.0 459.5 315.5 457.1 326.7C454.7 337.9 455.7 334.4 452.5 343.0C449.3 351.6 450.6 346.7 447.5 352.5C444.4 358.3 444.6 357.8 443.2 360.5" fill="none" stroke="#92300c" stroke-width="3.3" stroke-linecap="round" stroke-linejoin="round" /><path d="M226.5 357.5C227.3 359.3 227.2 359.7 229.0 363.0C230.8 366.3 229.7 364.5 232.0 367.5C234.3 370.5 233.0 369.3 236.0 372.0C239.0 374.7 237.3 373.5 241.0 375.5C244.7 377.5 242.3 376.2 247.0 378.0C251.7 379.8 249.8 379.3 255.0 380.8C260.2 382.3 256.7 381.4 262.5 382.5C268.3 383.6 265.3 383.2 272.5 384.0C279.7 384.8 276.0 384.5 284.0 385.0C292.0 385.5 292.3 385.4 296.5 385.6" fill="none" stroke="#92300c" stroke-width="3.3" stroke-linecap="round" stroke-linejoin="round" /><path d="M352.0 388.0C357.3 388.0 355.7 388.5 368.0 388.0C380.3 387.5 378.0 387.5 389.0 386.5C400.0 385.5 393.2 386.2 401.0 385.0C408.8 383.8 405.2 384.5 412.5 383.0C419.8 381.5 417.2 382.0 423.0 380.5C428.8 379.0 425.7 380.0 430.0 378.5C434.3 377.0 432.5 378.0 436.0 376.0C439.5 374.0 437.7 375.5 440.5 372.5C443.3 369.5 442.2 371.3 444.5 367.0C446.8 362.7 446.5 362.0 447.5 359.5" fill="none" stroke="#92300c" stroke-width="3.3" stroke-linecap="round" stroke-linejoin="round" /><path d="M226.500 357.500C227.800 361 229.500 364.500 232 367.500" fill="none" stroke="#1a1a1a" stroke-width="2.2" stroke-linecap="round" stroke-linejoin="round" /><path d="M447.600 359.500C446.500 364 444.500 368 441.500 371.500" fill="none" stroke="#1a1a1a" stroke-width="2.2" stroke-linecap="round" stroke-linejoin="round" /><path d="M268.750 385.500L231 461" fill="none" stroke="#92300c" stroke-width="3.3" stroke-linecap="round" stroke-linejoin="round" /><path d="M231.0 461.0C235.7 463.5 235.3 463.8 245.0 468.5C254.7 473.2 249.7 471.2 260.0 475.0C270.3 478.8 265.2 477.1 276.0 479.8C286.8 482.5 280.8 481.3 292.5 483.0C304.2 484.7 298.5 484.0 311.0 485.0C323.5 486.0 318.7 485.2 330.0 486.0C341.3 486.8 335.0 486.6 345.0 487.3C355.0 488.0 350.7 488.1 360.0 488.0C369.3 487.9 364.7 488.2 373.0 487.0C381.3 485.8 378.7 485.8 385.0 484.5C391.3 483.2 389.7 483.5 392.0 483.0" fill="none" stroke="#92300c" stroke-width="3.3" stroke-linecap="round" stroke-linejoin="round" /><path d="M389 389.500L398 478.500" fill="none" stroke="#92300c" stroke-width="3.3" stroke-linecap="round" stroke-linejoin="round" /><path d="M387.500 482.500L388.300 485.800L398.500 481.500Z" fill="#1a1a1a"/><path d="M278.8 399.5C280.7 401.7 280.8 401.2 284.5 406.0C288.2 410.8 286.7 408.8 290.0 413.8C293.3 418.8 292.0 416.0 294.5 421.0C297.0 426.0 296.7 424.8 297.5 428.8C298.3 432.8 298.2 430.6 297.0 433.0C295.8 435.4 296.8 434.2 293.8 436.0C290.8 437.8 292.6 437.1 288.0 438.3C283.4 439.5 285.3 439.1 280.0 439.5C274.7 439.9 274.7 439.6 272.0 439.6" fill="none" stroke="#92300c" stroke-width="3.3" stroke-linecap="round" stroke-linejoin="round" /><path d="M274 438L274 441.200L258 439.400Z" fill="#1a1a1a"/><path d="M361.8 410.8C358.8 413.0 358.6 412.8 353.0 417.5C347.4 422.2 350.0 420.5 345.0 425.0C340.0 429.5 341.7 426.8 338.0 431.0C334.3 435.2 334.5 433.5 334.0 437.5C333.5 441.5 333.7 439.7 336.5 443.0C339.3 446.3 338.0 444.8 342.5 447.5C347.0 450.2 345.0 448.7 350.0 451.0C355.0 453.3 355.0 453.3 357.5 454.5" fill="none" stroke="#92300c" stroke-width="3.3" stroke-linecap="round" stroke-linejoin="round" /><path d="M357.300 452.700L355.800 455.800L371 462.600Z" fill="#1a1a1a"/><circle cx="287.600" cy="329.700" r="10" fill="#92300c"/><path d="M326 329.500C321 334 317 337.500 314 341C313.300 349 315 360 322 366C326 369.300 333 369.500 337 365.500C342.500 360 344 350 342.800 338.500C337 337 331 333.500 326 329.500Z" fill="#ff0a0a" stroke="#92300c" stroke-width="3" stroke-linejoin="round"/><path d="M314 327C309 325.500 306 329 306.700 333C307.500 338 312 340.500 316 338C320 335.500 323 332 326 329C330 332.500 335 337 340.500 337.500C346 338 350 334 348.800 329.500C348 326 345.500 324.200 342 323.500" fill="none" stroke="#92300c" stroke-width="3.6" stroke-linecap="round" stroke-linejoin="round" /><path d="M345.500 325.200C344.500 324.200 343.200 323.700 341.800 323.400" fill="none" stroke="#1a1a1a" stroke-width="2.4" stroke-linecap="round" stroke-linejoin="round" /><path d="M342.200 341l.6 7" fill="none" stroke="#1a1a1a" stroke-width="2" stroke-linecap="round" stroke-linejoin="round" /><path d="M378 323.750L366 333L376 339.500C378 341.500 379.300 344 380 346" fill="none" stroke="#92300c" stroke-width="3.6" stroke-linecap="round" stroke-linejoin="round" /><path d="M378.800 343.500L380.500 347.500" fill="none" stroke="#1a1a1a" stroke-width="2.2" stroke-linecap="round" stroke-linejoin="round" /><path d="M351.500 161.500C346 156 342 146 342.700 138C343.500 131 347 128.300 351 128.600C355.500 129 359.200 134 359.200 143C359.200 151 356 158 351.500 161.500Z" fill="#b6f000" stroke="#92300c" stroke-width="3.500" stroke-linejoin="round"/><path d="M352 161C358 156 366 155 373 156.500C381 158.500 386.500 164 386.300 169.500C386 174.500 380 175 373 173C365 170.500 357 166 352 161Z" fill="#b6f000" stroke="#92300c" stroke-width="3.500" stroke-linejoin="round"/><path d="M352.500 160.500C348 165 343 168 341.500 173" fill="none" stroke="#92300c" stroke-width="3.3" stroke-linecap="round" stroke-linejoin="round" /><path d="M357.800 150.500l-1 4" fill="none" stroke="#1a1a1a" stroke-width="2.6" stroke-linecap="round" stroke-linejoin="round" /><path d="M355.500 164.500l3 1.500" fill="none" stroke="#1a1a1a" stroke-width="2.6" stroke-linecap="round" stroke-linejoin="round" /><path d="M477 280C480 276 485 273 491 272.300" fill="none" stroke="#92300c" stroke-width="3.3" stroke-linecap="round" stroke-linejoin="round" /><path d="M489 272.500C492 271.800 495 271.800 497.500 272.800" fill="none" stroke="#1a1a1a" stroke-width="1.8" stroke-linecap="round" stroke-linejoin="round" /><path d="M520.500 290.500C514 280 508 270 508.300 260C508.500 252 516 249.500 520.800 260C524 252 531 248.500 534 254.500C536.500 262 528 279 520.500 290.500Z" fill="#ff0505" stroke="#962a12" stroke-width="3" stroke-linejoin="round"/><text x="696" y="97.500" font-family="Liberation Sans, sans-serif" font-size="16.300" fill="#151515" textLength="58.500" lengthAdjust="spacingAndGlyphs">Heokon</text><text x="696" y="121.300" font-family="Liberation Sans, sans-serif" font-size="16.300" fill="#151515" textLength="96" lengthAdjust="spacingAndGlyphs">#Hoidap247</text></svg></div>
<div class="a" style="left:805.5px;top:73px;width:15px;height:442px;background:#262626"><svg class="a" style="left:4.5px;top:2.5px;" width="6" height="4.5" viewBox="0 0 6 4.5"><path d="M0 4.500L3 0 6 4.500z" fill="#a8a8a8"/></svg><svg class="a" style="left:4.5px;top:434px;" width="6" height="4.5" viewBox="0 0 6 4.5"><path d="M0 0L3 4.500 6 0z" fill="#a8a8a8"/></svg><div class="a" style="left:0.5px;top:9px;width:14px;height:423px;background:linear-gradient(90deg,#262626,#3a3a3a)"></div><div class="a" style="left:1px;top:171px;width:13px;height:97px;background:linear-gradient(90deg,#787878,#686868);border-radius:3px"></div></div>
<div class="a" style="left:143px;top:515px;width:678px;height:15px;background:#2a2a2a"><svg class="a" style="left:3px;top:4.5px;" width="4.5" height="6" viewBox="0 0 4.5 6"><path d="M4.500 0L0 3 4.500 6z" fill="#a8a8a8"/></svg><svg class="a" style="left:669px;top:4.5px;" width="4.5" height="6" viewBox="0 0 4.5 6"><path d="M0 0L4.500 3 0 6z" fill="#a8a8a8"/></svg><div class="a" style="left:9px;top:0.5px;width:657px;height:14px;background:linear-gradient(#363636,#242424)"></div><div class="a" style="left:262.7px;top:1.2px;width:156.3px;height:12.6px;background:linear-gradient(#7c7c7c,#6a6a6a);border-radius:3px"></div></div>
<div class="a" style="left:821px;top:56px;width:203px;height:475px;background:#1b1b1b"></div>
<div class="a" style="left:824px;top:56px;width:200px;height:17px;background:linear-gradient(#333,#2a2a2a)"><div class="a" style="left:0px;top:0px;width:200px;height:1px;background:#3c6a92"></div><div class="t" style="left:71px;top:4.5px;font-size:9px;color:#d4d4d4;letter-spacing:-0.45px;">Navigator</div><svg class="a" style="left:177px;top:4px;" width="8" height="8" viewBox="0 0 8 8"><path d="M3.500 1.500H.8v6h6V5" fill="none" stroke="#bdbdbd" stroke-width="1"/><path d="M3.800 4.500L7.200.800M4.800.700h2.600v2.600" fill="none" stroke="#bdbdbd" stroke-width="1"/></svg><svg class="a" style="left:189.5px;top:5px;" width="7" height="7" viewBox="0 0 7 7"><path d="M.8.800l5.400 5.400M6.200.800L.8 6.200" stroke="#d8d8d8" stroke-width="1.700"/></svg></div>
<div class="a" style="left:824px;top:73px;width:200px;height:21px;background:#222"><div class="tb " style="left:3px;top:2px;width:17px;height:17px"><svg class="a" style="left:0px;top:0px;" width="15" height="15" viewBox="0 0 16 16"><circle cx="6.800" cy="6.800" r="4" fill="none" stroke="#e4e4e4" stroke-width="1.300"/><path d="M9.800 9.800l3.700 3.700" stroke="#e4e4e4" stroke-width="1.800" stroke-linecap="round"/><path d="M6.200 5.200l.9-.6v4.400" stroke="#e4e4e4" stroke-width="1" fill="none"/></svg></div><div class="a" style="left:24px;top:5px;width:1px;height:10px;background:#505050"></div><div class="tb " style="left:28px;top:2px;width:17px;height:17px"><svg class="a" style="left:0px;top:0px;" width="15" height="15" viewBox="0 0 16 16"><circle cx="6.800" cy="6.800" r="4" fill="none" stroke="#e4e4e4" stroke-width="1.300"/><path d="M9.800 9.800l3.700 3.700" stroke="#e4e4e4" stroke-width="1.800" stroke-linecap="round"/><path d="M4.800 6.800h4M6.800 4.800v4" stroke="#e4e4e4" stroke-width="1.100"/></svg></div><div class="tb " style="left:49px;top:2px;width:17px;height:17px"><svg class="a" style="left:0px;top:0px;" width="15" height="15" viewBox="0 0 16 16"><rect x="2.500" y="3" width="11" height="10" fill="none" stroke="#e4e4e4" stroke-width="1"/><path d="M4 4.500h2.500L4 7zM12 4.500H9.500L12 7zM4 11.500h2.500L4 9zM12 11.500H9.500L12 9z" fill="#e4e4e4"/></svg></div><div class="tb " style="left:69px;top:2px;width:17px;height:17px"><svg class="a" style="left:0px;top:0px;" width="15" height="15" viewBox="0 0 16 16"><circle cx="6.800" cy="6.800" r="4" fill="none" stroke="#e4e4e4" stroke-width="1.300"/><path d="M9.800 9.800l3.700 3.700" stroke="#e4e4e4" stroke-width="1.800" stroke-linecap="round"/><path d="M4.800 6.800h4" stroke="#e4e4e4" stroke-width="1.100"/></svg></div><div class="a" style="left:90px;top:5px;width:1px;height:10px;background:#505050"></div><div class="tb " style="left:94px;top:2px;width:17px;height:17px"><svg class="a" style="left:0px;top:0px;" width="15" height="15" viewBox="0 0 16 16"><circle cx="8" cy="8" r="5.300" fill="none" stroke="#e4e4e4" stroke-width="1.500"/><rect x="5.300" y="5.800" width="5.400" height="4.400" fill="#e4e4e4" transform="rotate(-15 8 8)"/><path d="M2 4.500l3.500-.5-1 3.200z" fill="#e4e4e4"/></svg></div><div class="tb dk" style="left:115px;top:2px;width:17px;height:17px"><svg class="a" style="left:0px;top:0px;" width="15" height="15" viewBox="0 0 16 16"><rect x="4.500" y="5" width="7" height="6" fill="#e4e4e4"/><path d="M2.500 3l3 3M13.500 3l-3 3M2.500 13l3-3M13.500 13l-3-3" stroke="#e4e4e4" stroke-width="1.500"/></svg></div><div class="tb " style="left:135px;top:2px;width:17px;height:17px"><svg class="a" style="left:0px;top:0px;" width="15" height="15" viewBox="0 0 16 16"><circle cx="8" cy="8" r="5.300" fill="none" stroke="#e4e4e4" stroke-width="1.500"/><rect x="5.300" y="5.800" width="5.400" height="4.400" fill="#e4e4e4" transform="rotate(-15 8 8)"/><path d="M14 4.500l-3.500-.5 1 3.200z" fill="#e4e4e4"/></svg></div><div class="a" style="left:156px;top:5px;width:1px;height:10px;background:#505050"></div><div class="tb " style="left:160px;top:2px;width:17px;height:17px"><svg class="a" style="left:0px;top:0px;" width="15" height="15" viewBox="0 0 16 16"><rect x="2.500" y="7" width="4.500" height="6.500" fill="#e4e4e4"/><rect x="9.500" y="7" width="4" height="6.500" fill="none" stroke="#e4e4e4" stroke-width="1"/><path d="M4.500 5.500c0-4 7-4 7 0" fill="none" stroke="#e4e4e4" stroke-width="1.200"/></svg></div></div>
<div class="a" style="left:824px;top:94px;width:200px;height:66px;background:#474747;overflow:hidden"><div class="a" style="left:57px;top:1px;width:85px;height:65px;background:#fff"></div><svg class="a" style="left:0;top:0" width="200" height="66" viewBox="824 94 200 66"><circle cx="909.400" cy="126.300" r="13" fill="none" stroke="#a8431f" stroke-width=".7"/><rect x="904" y="131" width="20" height="9" fill="#fff"/><path d="M902 138.500l-3.500 7.500c5 2.500 12 2.800 17.500 2l-1-9M898 137.500c2 1.500 5 1.800 8 1.800M912 139.500c3.500 0 7.500-.8 9.500-3M904 141l2 3-3 1M913 142l-2.500 2.500 3 2" fill="none" stroke="#a8431f" stroke-width=".6"/><ellipse cx="911.200" cy="109.800" rx="1.400" ry="2.200" fill="#9ac020" transform="rotate(-10 911.200 109.800)"/><ellipse cx="913.500" cy="112.600" rx="2.300" ry="1.300" fill="#9ac020" transform="rotate(25 913.500 112.600)"/><circle cx="904.300" cy="129.800" r="1.200" fill="#b02a10"/><path d="M907.300 130.500h3.600l-1.600 4z" fill="#e81010"/><circle cx="901.500" cy="130.700" r="1.800" fill="#ffb0b0" opacity=".6"/><circle cx="916" cy="132" r="1.800" fill="#ffb0b0" opacity=".6"/><path d="M914.500 129.200l-1.200 1 1.200 1" fill="none" stroke="#a8431f" stroke-width=".5"/><path d="M929.300 126.200c-1.800-2.200-2.300-4-1.300-4.600.8-.4 1.300.6 1.300 1 .2-.6.900-1.400 1.600-.8.800 1-.3 2.500-1.600 4.400z" fill="#e81010"/><path d="M924.300 125.300l1.700-.6" stroke="#a8431f" stroke-width=".5"/><path d="M951 106.500h5M950 108.500h7" stroke="#bbb" stroke-width=".6"/><rect x="889.600" y="102.900" width="69.600" height="46.200" fill="none" stroke="#e00000" stroke-width="1.600"/></svg></div>
<div class="a" style="left:824px;top:163.5px;width:200px;height:16px;background:linear-gradient(#333,#2a2a2a)"><div class="a" style="left:0px;top:0px;width:200px;height:1px;background:#3c6a92"></div><div class="t" style="left:77.5px;top:4.5px;font-size:9px;color:#d4d4d4;letter-spacing:-0.40px;">Layer</div><svg class="a" style="left:177px;top:4px;" width="8" height="8" viewBox="0 0 8 8"><path d="M3.500 1.500H.8v6h6V5" fill="none" stroke="#bdbdbd" stroke-width="1"/><path d="M3.800 4.500L7.200.800M4.800.700h2.600v2.600" fill="none" stroke="#bdbdbd" stroke-width="1"/></svg><svg class="a" style="left:189.5px;top:5px;" width="7" height="7" viewBox="0 0 7 7"><path d="M.8.800l5.400 5.400M6.200.800L.8 6.200" stroke="#d8d8d8" stroke-width="1.700"/></svg></div>
<div class="a" style="left:824px;top:179.5px;width:200px;height:198px;background:#222"><div class="t" style="left:3.7999999999999545px;top:7.0px;font-size:9px;color:#d8d8d8;letter-spacing:-0.36px;">Opacity</div><div class="a" style="left:54px;top:4.5px;width:113px;height:11.6px;background:linear-gradient(90deg,#73bdf3,#4a98da)"></div><div class="t" style="left:171.79999999999995px;top:7.0px;font-size:9px;color:#d8d8d8;letter-spacing:-0.51px;">100 %</div><div class="t" style="left:3.7999999999999545px;top:25.5px;font-size:9px;color:#d8d8d8;letter-spacing:-0.57px;">Blending</div><div class="a" style="left:56px;top:21.19999999999999px;width:139.5px;height:15.3px;background:#454545;border-radius:2px"></div><div class="t" style="left:57.5px;top:25.5px;font-size:9px;color:#e0e0e0;letter-spacing:-0.75px;">Normal</div><svg class="a" style="left:186px;top:27.5px;" width="6" height="4" viewBox="0 0 6 4"><path d="M0 0h6L3 3.500z" fill="#c4c4c4"/></svg><div class="a" style="left:6.2000000000000455px;top:44.5px;width:8.6px;height:8.8px;border:1px solid #cfcfcf;border-radius:1px"></div><div class="t" style="left:18.399999999999977px;top:45.0px;font-size:9px;color:#d8d8d8;letter-spacing:-0.35px;">Protect Alpha</div><div class="a" style="left:77px;top:44.5px;width:8.6px;height:8.8px;border:1px solid #4a4a4a;border-radius:1px"></div><div class="t" style="left:89.5px;top:45.0px;font-size:9px;color:#6e6e6e;letter-spacing:-0.63px;">Clipping</div><div class="a" style="left:140px;top:44.5px;width:8.6px;height:8.8px;border:1px solid #cfcfcf;border-radius:1px"></div><div class="t" style="left:152.5px;top:45.0px;font-size:9px;color:#d8d8d8;letter-spacing:-0.75px;">Lock</div><div class="a" style="left:2px;top:59.80000000000001px;width:181.5px;height:112px;background:#484848;overflow:hidden"><div class="a" style="left:0px;top:0px;width:181.5px;height:29px;background:#575757;border-bottom:1px solid #444"></div><div class="a" style="left:3.5px;top:11px;width:7px;height:7px;background:#dcdcdc;border-radius:50%"></div><div class="a" style="left:25.5px;top:8.7px;width:26px;height:12px;overflow:hidden"><div class="a" style="left:0px;top:0px;width:26px;height:12px;background:repeating-conic-gradient(#fff 0 25%,#d4d4d4 0 50%) 0 0/4px 4px"></div><div class="t" style="left:1px;top:0.5px;font-size:5px;color:#333;letter-spacing:-1.21px;">Heokon</div><div class="t" style="left:1px;top:6px;font-size:5px;color:#333;letter-spacing:-0.30px;">#Hoidap247</div></div><div class="t" style="left:63.5px;top:9.5px;font-size:9.5px;color:#f0f0f0;letter-spacing:-0.12px;">Heokon</div><div class="a" style="left:0px;top:29px;width:14.5px;height:29.5px;background:#575757"></div><div class="a" style="left:14.5px;top:29px;width:167px;height:29.5px;background:#4a9bd8"></div><div class="a" style="left:3.5px;top:40.5px;width:7px;height:7px;background:#dcdcdc;border-radius:50%"></div><div class="a" style="left:25.5px;top:34.3px;width:26px;height:20px;border:1px solid #d8d8d8;overflow:hidden"><div class="a" style="left:0px;top:0px;width:26px;height:20px;background:repeating-conic-gradient(#fff 0 25%,#e0e0e0 0 50%) 0 0/5px 5px"></div><svg class="a" style="left:0px;top:0px;" width="26" height="20" viewBox="0 0 26 20"><circle cx="10" cy="9" r="4.500" fill="none" stroke="#f0b8a0" stroke-width=".7"/><path d="M8 14l-1.500 3.500h7V14" fill="none" stroke="#f0b8a0" stroke-width=".6"/><circle cx="17.500" cy="8.500" r=".8" fill="#f88"/></svg></div><div class="t" style="left:64px;top:39.5px;font-size:9.5px;color:#fff;font-weight:700;letter-spacing:0.48px;">Layer1</div><svg class="a" style="left:165px;top:37.5px;" width="14" height="14" viewBox="0 0 14 14"><circle cx="7" cy="7" r="3.300" fill="none" stroke="#fff" stroke-width="2.400"/><circle cx="7" cy="7" r="5.400" fill="none" stroke="#fff" stroke-width="2.200" stroke-dasharray="2.100 2.140"/></svg></div></div>
<div class="a" style="left:1008px;top:239.3px;width:13.7px;height:112px;background:#2b2b2b"></div><svg class="a" style="left:1012.35px;top:242.3px;" width="5" height="4" viewBox="0 0 5 4"><path d="M0 4L2.500 0 5 4z" fill="#a0a0a0"/></svg><svg class="a" style="left:1012.35px;top:344.3px;" width="5" height="4" viewBox="0 0 5 4"><path d="M0 0L2.500 4 5 0z" fill="#a0a0a0"/></svg><div class="a" style="left:1008.3px;top:247px;width:13.1px;height:95.5px;background:linear-gradient(90deg,#747474,#626262);border-radius:3px"></div>
<div class="a" style="left:826px;top:352.5px;width:194px;height:22.5px;background:#202020;border:1px solid #343434"><div class="tb " style="left:2.7000000000000455px;top:1.500px;width:17px;height:17.500px"><svg class="a" style="left:0px;top:0px;" width="15" height="15.5" viewBox="0 0 15.4839 16"><path d="M4 3h5.500L12 5.500V13H4z" fill="none" stroke="#e4e4e4" stroke-width="1.100"/><path d="M9.500 3v2.500H12" fill="none" stroke="#e4e4e4" stroke-width="1"/></svg></div><div class="tb " style="left:23.299999999999955px;top:1.500px;width:17px;height:17.500px"><svg class="a" style="left:0px;top:0px;" width="15" height="15.5" viewBox="0 0 15.4839 16"><path d="M4 3h5.500L12 5.500V13H4z" fill="none" stroke="#e4e4e4" stroke-width="1.100"/><path d="M9.500 3v2.500H12" fill="none" stroke="#e4e4e4" stroke-width="1"/><rect x="6" y="7.500" width="3.500" height="3.800" fill="none" stroke="#e4e4e4" stroke-width=".9"/></svg></div><div class="tb " style="left:43.39999999999998px;top:1.500px;width:17px;height:17.500px"><svg class="a" style="left:0px;top:0px;" width="15" height="15.5" viewBox="0 0 15.4839 16"><path d="M4 3h5.500L12 5.500V13H4z" fill="none" stroke="#e4e4e4" stroke-width="1.100"/><path d="M9.500 3v2.500H12" fill="none" stroke="#e4e4e4" stroke-width="1"/><path d="M7 8.300l1.200-.8v4" fill="none" stroke="#e4e4e4" stroke-width="1"/></svg></div><div class="tb " style="left:63.700000000000045px;top:1.500px;width:22px;height:17.500px"><svg class="a" style="left:0px;top:0px;" width="20" height="15.5" viewBox="0 0 20.6452 16"><path d="M4 3h5.500L12 5.500V13H4z" fill="none" stroke="#e4e4e4" stroke-width="1.100"/><path d="M9.500 3v2.500H12" fill="none" stroke="#e4e4e4" stroke-width="1"/><path d="M8 9v4M6 11h4" stroke="#454545" stroke-width="2.600"/><path d="M8.500 9.500v4M6.500 11.500h4" stroke="#e4e4e4" stroke-width="1.100"/><path d="M14.500 7.500h5L17 10.500z" fill="#e4e4e4"/></svg></div><div class="tb " style="left:88.70000000000005px;top:1.500px;width:17px;height:17.500px"><svg class="a" style="left:0px;top:0px;" width="15" height="15.5" viewBox="0 0 15.4839 16"><path d="M2.500 4.500h4l1.200 1.500h6V13h-11.200z" fill="#e4e4e4"/></svg></div><div class="a" style="left:110px;top:5px;width:1px;height:10px;background:#505050"></div><div class="tb " style="left:114px;top:1.500px;width:17px;height:17.500px"><svg class="a" style="left:0px;top:0px;" width="15" height="15.5" viewBox="0 0 15.4839 16"><rect x="3.500" y="5.500" width="7" height="7.500" fill="none" stroke="#e4e4e4" stroke-width="1.100"/><path d="M6 5V3.500h7V11h-2" fill="none" stroke="#e4e4e4" stroke-width="1.100"/></svg></div><div class="tb dk" style="left:134.29999999999995px;top:1.500px;width:17.5px;height:17.500px"><svg class="a" style="left:0px;top:0px;" width="15.5" height="15.5" viewBox="0 0 16 16"><rect x="3" y="3" width="3.500" height="3" fill="none" stroke="#e4e4e4" stroke-width=".9"/><rect x="3" y="10" width="3.500" height="3" fill="none" stroke="#e4e4e4" stroke-width=".9"/><path d="M6.500 4.500h2v7h-2M8.500 8h2" fill="none" stroke="#e4e4e4" stroke-width=".9"/><rect x="10.500" y="6" width="4" height="4" fill="#e4e4e4"/></svg></div><div class="a" style="left:156px;top:5px;width:1px;height:10px;background:#505050"></div><div class="tb " style="left:160px;top:1.500px;width:17px;height:17.500px"><svg class="a" style="left:0px;top:0px;" width="15" height="15.5" viewBox="0 0 15.4839 16"><path d="M4.500 6h7v7.500h-7z" fill="none" stroke="#e4e4e4" stroke-width="1.200"/><path d="M3.500 5h9M6.500 5V3.500h3V5M6.800 7.500v4.500M9.200 7.500v4.500" stroke="#e4e4e4" stroke-width="1.100" fill="none"/></svg></div></div>
<div class="a" style="left:824px;top:380px;width:200px;height:16px;background:linear-gradient(#333,#2a2a2a)"><div class="a" style="left:0px;top:0px;width:200px;height:1px;background:#3c6a92"></div><div class="t" style="left:69px;top:4.5px;font-size:9px;color:#d4d4d4;letter-spacing:-0.60px;">Brush Size</div><svg class="a" style="left:177px;top:4px;" width="8" height="8" viewBox="0 0 8 8"><path d="M3.500 1.500H.8v6h6V5" fill="none" stroke="#bdbdbd" stroke-width="1"/><path d="M3.800 4.500L7.200.800M4.800.700h2.600v2.600" fill="none" stroke="#bdbdbd" stroke-width="1"/></svg><svg class="a" style="left:189.5px;top:5px;" width="7" height="7" viewBox="0 0 7 7"><path d="M.8.800l5.400 5.400M6.200.800L.8 6.200" stroke="#d8d8d8" stroke-width="1.700"/></svg></div>
<div class="a" style="left:824.3px;top:396.5px;width:179.2px;height:134.5px;background:#444;overflow:hidden"><div class="a" style="left:0.0px;top:0.0px;width:29.85px;height:37.6px;background:#565656;border-right:1px solid #444;border-bottom:1px solid #444;overflow:hidden"><div class="a" style="left:13.85px;top:14.25px;width:1.10px;height:1.10px;border-radius:50%;background:#9a9a9a"></div><div class="t" style="left:12.4px;top:28.3px;font-size:8px;color:#f0f0f0;letter-spacing:-0.45px;">1</div></div><div class="a" style="left:29.85px;top:0.0px;width:29.85px;height:37.6px;background:#565656;border-right:1px solid #444;border-bottom:1px solid #444;overflow:hidden"><div class="a" style="left:13.65px;top:14.05px;width:1.50px;height:1.50px;border-radius:50%;background:#9a9a9a"></div><div class="t" style="left:9.9px;top:28.3px;font-size:8px;color:#f0f0f0;letter-spacing:-0.71px;">1.5</div></div><div class="a" style="left:59.7px;top:0.0px;width:29.85px;height:37.6px;background:#565656;border-right:1px solid #444;border-bottom:1px solid #444;overflow:hidden"><div class="a" style="left:13.40px;top:13.80px;width:2.00px;height:2.00px;border-radius:50%;background:#d0d0d0"></div><div class="t" style="left:12.4px;top:28.3px;font-size:8px;color:#f0f0f0;letter-spacing:-0.45px;">2</div></div><div class="a" style="left:89.55px;top:0.0px;width:29.85px;height:37.6px;background:#565656;border-right:1px solid #444;border-bottom:1px solid #444;overflow:hidden"><div class="a" style="left:13.10px;top:13.50px;width:2.60px;height:2.60px;border-radius:50%;background:#f2f2f2"></div><div class="t" style="left:12.4px;top:28.3px;font-size:8px;color:#f0f0f0;letter-spacing:-0.45px;">3</div></div><div class="a" style="left:119.4px;top:0.0px;width:29.85px;height:37.6px;background:#565656;border-right:1px solid #444;border-bottom:1px solid #444;overflow:hidden"><div class="a" style="left:12.70px;top:13.10px;width:3.40px;height:3.40px;border-radius:50%;background:#f2f2f2"></div><div class="t" style="left:12.4px;top:28.3px;font-size:8px;color:#f0f0f0;letter-spacing:-0.45px;">4</div></div><div class="a" style="left:149.25px;top:0.0px;width:29.85px;height:37.6px;background:#565656;border-right:1px solid #444;border-bottom:1px solid #444;overflow:hidden"><div class="a" style="left:12.30px;top:12.70px;width:4.20px;height:4.20px;border-radius:50%;background:#f2f2f2"></div><div class="t" style="left:12.4px;top:28.3px;font-size:8px;color:#f0f0f0;letter-spacing:-0.45px;">5</div></div><div class="a" style="left:0.0px;top:37.6px;width:29.85px;height:37.6px;background:#565656;border-right:1px solid #444;border-bottom:1px solid #444;overflow:hidden"><div class="a" style="left:11.40px;top:11.80px;width:6.00px;height:6.00px;border-radius:50%;background:#f2f2f2"></div><div class="t" style="left:12.4px;top:28.3px;font-size:8px;color:#f0f0f0;letter-spacing:-0.45px;">7</div></div><div class="a" style="left:29.85px;top:37.6px;width:29.85px;height:37.6px;background:#565656;border-right:1px solid #444;border-bottom:1px solid #444;overflow:hidden"><div class="a" style="left:10.50px;top:10.90px;width:7.80px;height:7.80px;border-radius:50%;background:#f2f2f2"></div><div class="t" style="left:9.9px;top:28.3px;font-size:8px;color:#f0f0f0;letter-spacing:0.05px;">10</div></div><div class="a" style="left:59.7px;top:37.6px;width:29.85px;height:37.6px;background:#565656;border-right:1px solid #444;border-bottom:1px solid #444;overflow:hidden"><div class="a" style="left:9.60px;top:10.00px;width:9.60px;height:9.60px;border-radius:50%;background:#f2f2f2"></div><div class="t" style="left:9.9px;top:28.3px;font-size:8px;color:#f0f0f0;letter-spacing:0.05px;">12</div></div><div class="a" style="left:89.55px;top:37.6px;width:29.85px;height:37.6px;background:#565656;border-right:1px solid #444;border-bottom:1px solid #444;overflow:hidden"><div class="a" style="left:8.60px;top:9.00px;width:11.60px;height:11.60px;border-radius:50%;background:#f2f2f2"></div><div class="t" style="left:9.9px;top:28.3px;font-size:8px;color:#f0f0f0;letter-spacing:0.05px;">15</div></div><div class="a" style="left:119.4px;top:37.6px;width:29.85px;height:37.6px;background:#565656;border-right:1px solid #444;border-bottom:1px solid #444;overflow:hidden"><div class="a" style="left:6.50px;top:6.90px;width:15.80px;height:15.80px;border-radius:50%;background:#f2f2f2"></div><div class="t" style="left:9.9px;top:28.3px;font-size:8px;color:#f0f0f0;letter-spacing:0.05px;">20</div></div><div class="a" style="left:149.25px;top:37.6px;width:29.85px;height:37.6px;background:#565656;border-right:1px solid #444;border-bottom:1px solid #444;overflow:hidden"><div class="a" style="left:5.10px;top:5.50px;width:18.60px;height:18.60px;border-radius:50%;background:#f2f2f2"></div><div class="t" style="left:9.9px;top:28.3px;font-size:8px;color:#f0f0f0;letter-spacing:0.05px;">25</div></div><div class="a" style="left:0.0px;top:75.2px;width:29.85px;height:37.6px;background:#565656;border-right:1px solid #444;border-bottom:1px solid #444;overflow:hidden"><div class="a" style="left:5.00px;top:5.40px;width:18.80px;height:18.80px;border-radius:50%;background:#f2f2f2"></div><div class="t" style="left:9.9px;top:28.3px;font-size:8px;color:#f0f0f0;letter-spacing:0.05px;">30</div></div><div class="a" style="left:29.85px;top:75.2px;width:29.85px;height:37.6px;background:#565656;border-right:1px solid #444;border-bottom:1px solid #444;overflow:hidden"><div class="a" style="left:5.00px;top:5.40px;width:18.80px;height:18.80px;border-radius:50%;background:#f2f2f2"></div><div class="t" style="left:9.9px;top:28.3px;font-size:8px;color:#f0f0f0;letter-spacing:0.05px;">40</div></div><div class="a" style="left:59.7px;top:75.2px;width:29.85px;height:37.6px;background:#565656;border-right:1px solid #444;border-bottom:1px solid #444;overflow:hidden"><div class="a" style="left:5.00px;top:5.40px;width:18.80px;height:18.80px;border-radius:50%;background:#f2f2f2"></div><div class="t" style="left:9.9px;top:28.3px;font-size:8px;color:#f0f0f0;letter-spacing:0.05px;">50</div></div><div class="a" style="left:89.55px;top:75.2px;width:29.85px;height:37.6px;background:#565656;border-right:1px solid #444;border-bottom:1px solid #444;overflow:hidden"><div class="a" style="left:5.00px;top:5.40px;width:18.80px;height:18.80px;border-radius:50%;background:#f2f2f2"></div><div class="t" style="left:9.9px;top:28.3px;font-size:8px;color:#f0f0f0;letter-spacing:0.05px;">70</div></div><div class="a" style="left:119.4px;top:75.2px;width:29.85px;height:37.6px;background:#565656;border-right:1px solid #444;border-bottom:1px solid #444;overflow:hidden"><div class="a" style="left:5.00px;top:5.40px;width:18.80px;height:18.80px;border-radius:50%;background:#f2f2f2"></div><div class="t" style="left:7.7px;top:28.3px;font-size:8px;color:#f0f0f0;letter-spacing:0.05px;">100</div></div><div class="a" style="left:149.25px;top:75.2px;width:29.85px;height:37.6px;background:#565656;border-right:1px solid #444;border-bottom:1px solid #444;overflow:hidden"><div class="a" style="left:5.00px;top:5.40px;width:18.80px;height:18.80px;border-radius:50%;background:#f2f2f2"></div><div class="t" style="left:7.7px;top:28.3px;font-size:8px;color:#f0f0f0;letter-spacing:0.05px;">150</div></div><div class="a" style="left:0.0px;top:112.8px;width:29.85px;height:37.6px;background:#565656;border-right:1px solid #444;border-bottom:1px solid #444;overflow:hidden"><div class="a" style="left:5.00px;top:5.40px;width:18.80px;height:18.80px;border-radius:50%;background:#f2f2f2"></div><div class="t" style="left:7.7px;top:28.3px;font-size:8px;color:#f0f0f0;letter-spacing:0.05px;">200</div></div><div class="a" style="left:29.85px;top:112.8px;width:29.85px;height:37.6px;background:#565656;border-right:1px solid #444;border-bottom:1px solid #444;overflow:hidden"><div class="a" style="left:5.00px;top:5.40px;width:18.80px;height:18.80px;border-radius:50%;background:#f2f2f2"></div><div class="t" style="left:7.7px;top:28.3px;font-size:8px;color:#f0f0f0;letter-spacing:0.05px;">300</div></div><div class="a" style="left:59.7px;top:112.8px;width:29.85px;height:37.6px;background:#565656;border-right:1px solid #444;border-bottom:1px solid #444;overflow:hidden"><div class="a" style="left:5.00px;top:5.40px;width:18.80px;height:18.80px;border-radius:50%;background:#f2f2f2"></div><div class="t" style="left:7.7px;top:28.3px;font-size:8px;color:#f0f0f0;letter-spacing:0.05px;">400</div></div><div class="a" style="left:89.55px;top:112.8px;width:29.85px;height:37.6px;background:#565656;border-right:1px solid #444;border-bottom:1px solid #444;overflow:hidden"><div class="a" style="left:5.00px;top:5.40px;width:18.80px;height:18.80px;border-radius:50%;background:#f2f2f2"></div><div class="t" style="left:7.7px;top:28.3px;font-size:8px;color:#f0f0f0;letter-spacing:0.05px;">500</div></div><div class="a" style="left:119.4px;top:112.8px;width:29.85px;height:37.6px;background:#565656;border-right:1px solid #444;border-bottom:1px solid #444;overflow:hidden"><div class="a" style="left:5.00px;top:5.40px;width:18.80px;height:18.80px;border-radius:50%;background:#f2f2f2"></div><div class="t" style="left:7.7px;top:28.3px;font-size:8px;color:#f0f0f0;letter-spacing:0.05px;">700</div></div><div class="a" style="left:149.25px;top:112.8px;width:29.85px;height:37.6px;background:#565656;border-right:1px solid #444;border-bottom:1px solid #444;overflow:hidden"><div class="a" style="left:5.00px;top:5.40px;width:18.80px;height:18.80px;border-radius:50%;background:#f2f2f2"></div><div class="t" style="left:5.4px;top:28.3px;font-size:8px;color:#f0f0f0;letter-spacing:0.05px;">1000</div></div></div>
<div class="a" style="left:1009.3px;top:396.5px;width:13.2px;height:134.5px;background:#2b2b2b"></div><svg class="a" style="left:1013.4px;top:399.5px;" width="5" height="4" viewBox="0 0 5 4"><path d="M0 4L2.500 0 5 4z" fill="#a0a0a0"/></svg><svg class="a" style="left:1013.4px;top:524.0px;" width="5" height="4" viewBox="0 0 5 4"><path d="M0 0L2.500 4 5 0z" fill="#a0a0a0"/></svg><div class="a" style="left:1009.5999999999999px;top:405px;width:12.6px;height:104.5px;background:linear-gradient(90deg,#747474,#626262);border-radius:3px"></div>
<div class="a" style="left:0px;top:531px;width:1024px;height:16px;background:#1f1f1f"><div class="t" style="left:4.5px;top:4px;font-size:9px;color:#cfcfcf;letter-spacing:-0.33px;">1600 * 1200 pixel</div><div class="t" style="left:75.5px;top:4px;font-size:9px;color:#cfcfcf;letter-spacing:-0.13px;">(11.6 * 8.7cm)</div><div class="t" style="left:136.3px;top:4px;font-size:9px;color:#cfcfcf;letter-spacing:-0.22px;">350 dpi</div><div class="t" style="left:171.3px;top:4px;font-size:9px;color:#cfcfcf;letter-spacing:-0.50px;">66 %</div><div class="t" style="left:197.5px;top:4px;font-size:9px;color:#cfcfcf;letter-spacing:-0.42px;">( 666, 693 )</div><div class="t" style="left:246.3px;top:4px;font-size:9px;color:#cfcfcf;letter-spacing:-0.02px;">Draw a straight line by holding down Shift, Change a brush size by holding down Ctrl, Alt, and dragging</div></div>
<div class="a" style="left:0px;top:547px;width:1024px;height:29px;overflow:hidden;background:#0c0c0a"><div class="a" style="left:0px;top:0px;width:1024px;height:29px;background:linear-gradient(90deg,#0d0c0a 0,#100f0c 30%,#1a160e 40%,#15140e 55%,#0f120c 70%,#0c0e0a 100%)"></div><div class="a" style="left:380px;top:2px;width:130px;height:30px;background:#3a2c14;filter:blur(12px);opacity:0.8;border-radius:15px;"></div><div class="a" style="left:520px;top:-5px;width:90px;height:25px;background:#2a3016;filter:blur(10px);opacity:0.8;border-radius:12px;"></div><div class="a" style="left:640px;top:4px;width:140px;height:30px;background:#26341a;filter:blur(12px);opacity:0.9;border-radius:15px;"></div><div class="a" style="left:700px;top:8px;width:60px;height:20px;background:#34441e;filter:blur(8px);opacity:0.7;border-radius:10px;"></div><div class="a" style="left:800px;top:0px;width:110px;height:30px;background:#1c2816;filter:blur(10px);opacity:0.9;border-radius:12px;"></div><div class="a" style="left:826px;top:-4px;width:16px;height:36px;background:#34482a;filter:blur(5px);opacity:0.8;border-radius:8px;"></div><div class="a" style="left:90px;top:0px;width:100px;height:30px;background:#1c170c;filter:blur(10px);opacity:0.8;border-radius:12px;"></div><div class="a" style="left:0px;top:0px;width:1024px;height:1px;background:#5a5a5a;opacity:.8"></div><div class="a" style="left:195.7px;top:1px;width:44.3px;height:28px;background:linear-gradient(#6e6e6e 0,#505050 45%,#2e2e2e 55%,#3a3a3a 100%);border:1px solid #8a8a8a;border-bottom:0;border-radius:2px 2px 0 0;opacity:.92"></div><div class="a" style="left:243.2px;top:1px;width:43.3px;height:28px;background:linear-gradient(#b8b8b8 0,#8a8a8a 45%,#5a5a5a 55%,#6e6e6e 100%);border:1px solid #c8c8c8;border-bottom:0;border-radius:2px 2px 0 0;opacity:.92"></div><div class="a" style="left:289.5px;top:1px;width:39.5px;height:28px;background:linear-gradient(#6e6e6e 0,#505050 45%,#2e2e2e 55%,#3a3a3a 100%);border:1px solid #8a8a8a;border-bottom:0;border-radius:2px 2px 0 0;opacity:.92"></div><div class="a" style="left:335.7px;top:1px;width:43.3px;height:28px;background:linear-gradient(#6e6e6e 0,#505050 45%,#2e2e2e 55%,#3a3a3a 100%);border:1px solid #8a8a8a;border-bottom:0;border-radius:2px 2px 0 0;opacity:.92"></div><svg class="a" style="left:6px;top:1.5px;" width="28" height="28" viewBox="0 0 28 28"><defs><radialGradient id="ob" cx=".5" cy=".75" r=".75"><stop offset="0" stop-color="#7fd0f8"/><stop offset=".45" stop-color="#2a7fd0"/><stop offset="1" stop-color="#103a78"/></radialGradient></defs><circle cx="14" cy="14" r="13.500" fill="url(#ob)" stroke="#9ab8d8" stroke-width=".8"/><ellipse cx="14" cy="7.500" rx="10.500" ry="6" fill="#fff" opacity=".28"/><g transform="translate(14 14.500) scale(1.250) translate(-13.300 -14)"><path d="M8 9.500c1.800-1 3.500-1 5.300-.2l-1 4c-1.800-.8-3.500-.8-5.300.2z" fill="#f0562c"/><path d="M14.500 9.800c1.800.8 3.500.8 5.300-.2l-1 4c-1.800 1-3.500 1-5.300.2z" fill="#7cc420"/><path d="M6.700 14.500c1.800-1 3.500-1 5.300-.2l-1 4c-1.800-.8-3.500-.8-5.300.2z" fill="#2a9be8"/><path d="M13.200 14.800c1.800.8 3.500.8 5.300-.2l-1 4c-1.800 1-3.500 1-5.300.2z" fill="#f8c81c"/></g></svg><svg class="a" style="left:68px;top:5px;" width="22" height="19" viewBox="0 0 22 19"><path d="M0 1l9 8.500L0 18z" fill="#7a3fd0"/><path d="M21.500 0v19L8 9.500z" fill="#c8a6f4"/><path d="M8 9.500l5-3.800v7.600z" fill="#8f5ae0"/></svg><svg class="a" style="left:114px;top:3px;" width="24" height="22" viewBox="0 0 24 22"><text x="2.500" y="21.500" font-family="Liberation Sans, sans-serif" font-weight="700" font-size="33" fill="#38a4f0">e</text><path d="M3 19C-3 24 2 25 9 20" fill="none" stroke="#f0b818" stroke-width="2"/><path d="M12 5C17 0 25 -2 22.500 4.500" fill="none" stroke="#f0b818" stroke-width="2"/></svg><svg class="a" style="left:160px;top:2.5px;" width="24" height="24" viewBox="0 0 24 24"><circle cx="12" cy="12.500" r="11" fill="#5aaa48" stroke="#e8f4e4" stroke-width="1.200"/><circle cx="12" cy="13" r="5" fill="none" stroke="#fff" stroke-width="2.200"/><circle cx="12" cy="13" r="1.800" fill="#fff"/><path d="M12 13L17 -1l7 5z" fill="#120f0a"/><path d="M15.500 6.500L17.800 1.500M17.500 8L21.500 4M19 10L23.500 8" stroke="#f08a20" stroke-width="1.800"/></svg><svg class="a" style="left:206px;top:3px;" width="23" height="23" viewBox="0 0 23 23"><circle cx="11.500" cy="11.500" r="11" fill="#e84030"/><path d="M11.500 11.500L1.970 6A11 11 0 0 0 11.500 22.500L17 13z" fill="#3aa050"/><path d="M11.500 11.500L11.500 22.500A11 11 0 0 0 21.030 6L11.500 6z" fill="#f8c820"/><path d="M1.970 6A11 11 0 0 1 21.030 6L11.500 6z" fill="#e84030"/><circle cx="11.500" cy="11.500" r="5.200" fill="#fff"/><circle cx="11.500" cy="11.500" r="4.100" fill="#4a8af0"/></svg><svg class="a" style="left:253.2px;top:2px;" width="23.5" height="23.5" viewBox="0 0 23.5 23.5"><rect x="0" y="0" width="23.500" height="23.500" rx="3.500" fill="#f2f2f2"/><path d="M12 3.500c5 4 7.500 8 5.500 12.500-1.500 3.500-6.500 4.500-9.500 2-3-2.600-2.500-7 .5-9.500 1.500-1.300 3-2.800 3.500-5z" fill="#f05030"/><path d="M6.500 11c-1.500 3-.8 5.500 1.500 7.200 2 1.500 4.500 1.500 6.200.5-3-.2-6.500-3-7.700-7.700z" fill="#30b070"/><path d="M17.800 10.500c1.300 3.500 0 6.500-3.300 8 2-2.500 2.800-5 3.300-8z" fill="#3088e0"/><path d="M12 3.500c-.4 2.200-2 3.700-3.400 5 2-.4 3.600-2 3.400-5z" fill="#f8a020"/></svg><svg class="a" style="left:297px;top:1.5px;" width="25" height="26" viewBox="0 0 25 26"><rect x="2" y="12" width="22" height="14" fill="#1a78e0"/><path d="M12.500 1C19 1 23.500 5.500 23.500 11.500S19 22 12.500 22c-2 0-3.800-.4-5.300-1.200L2.500 22.500l1.300-4.200C2.300 16.500 1.500 14.100 1.500 11.500 1.500 5.500 6 1 12.500 1z" fill="#fff"/><text x="4.200" y="14.500" font-family="Liberation Sans, sans-serif" font-weight="700" font-size="8.500" fill="#1a78e0" textLength="17" lengthAdjust="spacingAndGlyphs">Zalo</text></svg><svg class="a" style="left:345px;top:1.5px;" width="26" height="25" viewBox="0 0 26 25"><path d="M10 5.500c6-2 12 1 12 6.500s-5 10-11 9.500c-2.500-.2-2.500-2-1.500-3.200 1-1.300.2-2.500-1.500-2.300-3 .4-5.500-1-5.500-3.800C2.500 9 5.500 7 10 5.500z" fill="#d8e4f0" stroke="#8aa0b8" stroke-width=".6"/><circle cx="8" cy="11" r="1.700" fill="#e84040"/><circle cx="12.500" cy="9" r="1.700" fill="#f0c020"/><circle cx="17" cy="10.500" r="1.700" fill="#40a050"/><circle cx="16" cy="16" r="1.700" fill="#3878d8"/><path d="M21.500 1.500l2 1.300L16 19.500l-2.300 1.800.3-3z" fill="#e89030"/><path d="M21.500 1.500l2 1.300-1.500 3.300-2-1.200z" fill="#f8d878"/></svg><div class="t" style="left:923.5px;top:8.5px;font-size:9.5px;color:#e8e8e8;letter-spacing:-1.10px;">EN</div><svg class="a" style="left:946.5px;top:13.5px;" width="6" height="4" viewBox="0 0 6 4"><path d="M0 4L3 0l3 4z" fill="#f0f0f0"/></svg><div class="t" style="left:964.5px;top:2.5px;font-size:9px;color:#f4f4f4;letter-spacing:-0.13px;">10:17 AM</div><div class="t" style="left:966.5px;top:16.5px;font-size:9px;color:#f4f4f4;letter-spacing:-0.13px;">9/8/2021</div><div class="a" style="left:1014px;top:1px;width:10px;height:28px;background:linear-gradient(90deg,#2a2a2a,#4a4a4a 40%,#1a1a1a);border-left:1px solid #6a6a6a"></div></div>
</body>
</html>
